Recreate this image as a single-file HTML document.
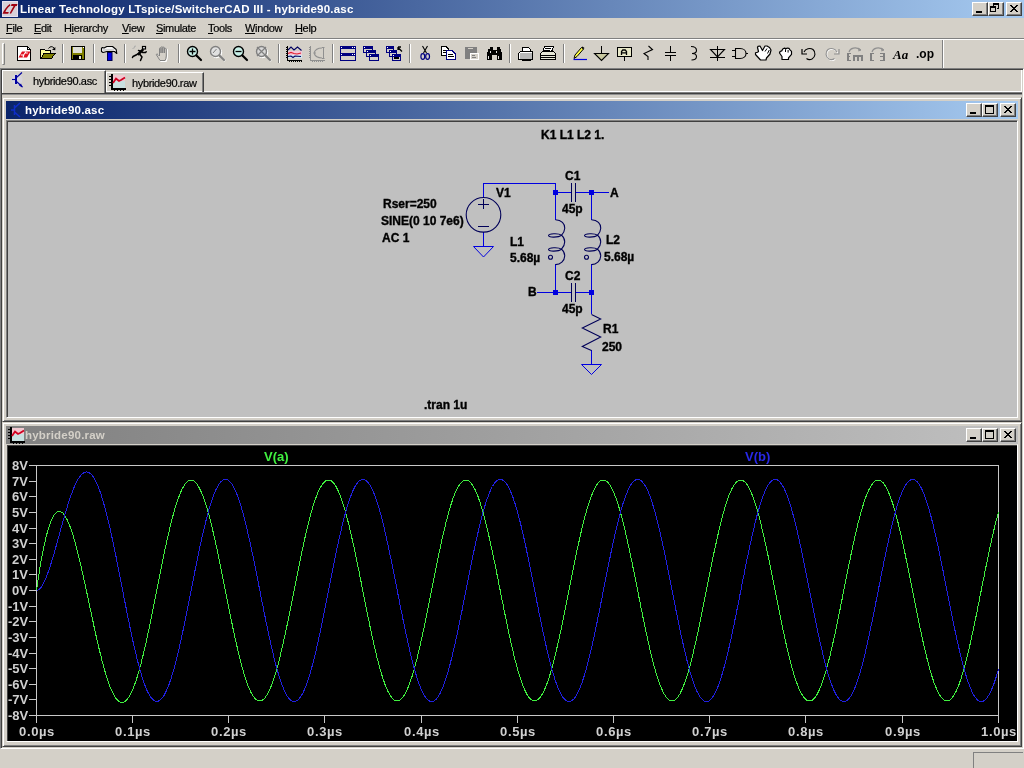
<!DOCTYPE html><html><head><meta charset="utf-8"><style>
*{box-sizing:border-box}
body{margin:0;width:1024px;height:768px;overflow:hidden;background:#D4D0C8;position:relative;font-family:"Liberation Sans",sans-serif;font-size:11px;color:#000}
.a{position:absolute}
.t{position:absolute;white-space:nowrap;line-height:1;will-change:transform}
.btn{position:absolute;width:16px;height:14px;background:#D4D0C8;border-top:1px solid #fff;border-left:1px solid #fff;border-right:1px solid #404040;border-bottom:1px solid #404040;box-shadow:inset -1px -1px 0 #808080}
u{text-decoration:underline;text-underline-offset:1px;text-decoration-thickness:1px}
.ax{color:#D0D0D0;font-size:13px;font-weight:bold}
.mn{letter-spacing:-0.35px;-webkit-text-stroke:0.2px #000}
.sl{font-weight:bold;font-size:12px;-webkit-text-stroke:0.35px #000}
</style></head><body>
<div class="a" style="left:0;top:0;width:1024px;height:18px;background:linear-gradient(to right,#0A246A,#A6CAF0)"></div>
<div class="t" style="left:20px;top:3.5px;font-weight:bold;color:#fff;font-size:11.5px;letter-spacing:0.2px">Linear Technology LTspice/SwitcherCAD III - hybride90.asc</div>
<svg class="a" style="left:2px;top:1px" width="16" height="16"><rect x=".5" y=".5" width="15" height="15" fill="#D8D0D8" stroke="#E8E0F0"/><path d="M0.5,12.8 C2,9 4.5,5.5 7.8,3 L8.4,4.6 C5.8,6.6 4,9 3.4,11 L6.8,11 L6.2,12.8 Z" fill="#A00010"/><path d="M9.5,3 H15.5 L14.8,5 H13.5 L9,12.8 L7.6,12.3 L11.6,5 H9 Z" fill="#A00010"/></svg>
<div class="btn" style="left:972px;top:2px"><svg width="16" height="14" style="position:absolute;left:-1px;top:-1px" shape-rendering="crispEdges"><rect x="4" y="9" width="6" height="2" fill="#000"/></svg></div>
<div class="btn" style="left:988px;top:2px"><svg width="16" height="14" style="position:absolute;left:-1px;top:-1px" shape-rendering="crispEdges"><rect x="5" y="1" width="6" height="2" fill="#000"/><rect x="5" y="3" width="1" height="1" fill="#000"/><rect x="10" y="3" width="1" height="4" fill="#000"/><rect x="9" y="6" width="1" height="1" fill="#000"/><rect x="2" y="4" width="6" height="2" fill="#000"/><rect x="2" y="6" width="1" height="4" fill="#000"/><rect x="7" y="6" width="1" height="4" fill="#000"/><rect x="2" y="9" width="6" height="1" fill="#000"/></svg></div>
<div class="btn" style="left:1006px;top:2px"><svg width="16" height="14" style="position:absolute;left:-1px;top:-1px" shape-rendering="crispEdges"><rect x="4" y="3" width="2" height="1" fill="#000"/><rect x="10" y="3" width="2" height="1" fill="#000"/><rect x="5" y="4" width="2" height="1" fill="#000"/><rect x="9" y="4" width="2" height="1" fill="#000"/><rect x="6" y="5" width="4" height="1" fill="#000"/><rect x="7" y="6" width="2" height="1" fill="#000"/><rect x="6" y="7" width="4" height="1" fill="#000"/><rect x="5" y="8" width="2" height="1" fill="#000"/><rect x="9" y="8" width="2" height="1" fill="#000"/><rect x="4" y="9" width="2" height="1" fill="#000"/><rect x="10" y="9" width="2" height="1" fill="#000"/></svg></div>
<div class="t mn" style="left:6px;top:23px"><u>F</u>ile</div>
<div class="t mn" style="left:34px;top:23px"><u>E</u>dit</div>
<div class="t mn" style="left:64px;top:23px">H<u>i</u>erarchy</div>
<div class="t mn" style="left:122px;top:23px"><u>V</u>iew</div>
<div class="t mn" style="left:156px;top:23px"><u>S</u>imulate</div>
<div class="t mn" style="left:208px;top:23px"><u>T</u>ools</div>
<div class="t mn" style="left:245px;top:23px"><u>W</u>indow</div>
<div class="t mn" style="left:295px;top:23px"><u>H</u>elp</div>
<div class="a" style="left:0;top:38px;width:1024px;height:1px;background:#808080"></div>
<div class="a" style="left:0;top:39px;width:1024px;height:1px;background:#fff"></div>
<svg class="a" style="left:0;top:0" width="1024" height="70"><path d="M2,43 V64 M2,43 H4" stroke="#fff" stroke-width="1" transform="translate(.5,.5)" fill="none"/><path d="M4,43 V64 H2" stroke="#808080" stroke-width="1" transform="translate(.5,.5)" fill="none"/><path d="M62.5,44 V63" stroke="#808080"/><path d="M63.5,44 V63" stroke="#fff"/><path d="M93.5,44 V63" stroke="#808080"/><path d="M94.5,44 V63" stroke="#fff"/><path d="M124.5,44 V63" stroke="#808080"/><path d="M125.5,44 V63" stroke="#fff"/><path d="M178.5,44 V63" stroke="#808080"/><path d="M179.5,44 V63" stroke="#fff"/><path d="M278.5,44 V63" stroke="#808080"/><path d="M279.5,44 V63" stroke="#fff"/><path d="M332.5,44 V63" stroke="#808080"/><path d="M333.5,44 V63" stroke="#fff"/><path d="M409.5,44 V63" stroke="#808080"/><path d="M410.5,44 V63" stroke="#fff"/><path d="M509.5,44 V63" stroke="#808080"/><path d="M510.5,44 V63" stroke="#fff"/><path d="M563.5,44 V63" stroke="#808080"/><path d="M564.5,44 V63" stroke="#fff"/><path d="M942.5,40 V68" stroke="#808080"/><path d="M943.5,40 V68" stroke="#fff"/><g shape-rendering="crispEdges"><path d="M17.5,46.5 H27.5 L30.5,49.5 V60.5 H17.5 Z" fill="#fff" stroke="#000"/><path d="M27.5,46.5 V49.5 H30.5" fill="none" stroke="#000"/></g><path d="M18.5,57.5 L22,51.5 H30.5 L27,57.5 Z" fill="#E01020"/><path d="M20.8,55 H23.6 L25,53 H27.8 M23.8,55 L23,57.5 M25,53 L25.8,51.5" fill="none" stroke="#fff" stroke-width="1.1"/><g shape-rendering="crispEdges"><path d="M40.5,58.5 V49.5 H44.5 L45.5,50.5 H50.5 V53.5" fill="#FFFF99" stroke="#000"/><path d="M41,58.5 L44,53.5 H55 L51.5,58.5 Z" fill="#808000" stroke="#000"/></g><path d="M48.5,48.5 Q51,45 54,48" fill="none" stroke="#000" stroke-width="1"/><path d="M52,49.8 L55.3,47 L55.3,50.3 Z" fill="#000"/><g shape-rendering="crispEdges"><rect x="71.5" y="46.5" width="13" height="13" fill="#808000" stroke="#000"/><rect x="73" y="47" width="9" height="6" fill="#E0E0D8"/><rect x="73" y="55" width="9" height="5" fill="#000"/><rect x="79" y="56" width="2" height="3" fill="#E8E8D0"/><rect x="83" y="47" width="1" height="1" fill="#fff"/></g><path d="M101.5,48.2 L102.5,47.5 L104,48 L106.8,46.5 H112.5 L116.2,49.5 L116.8,53.5 L114.5,51.5 H107 L103,52.5 L101.5,51.5 Z" fill="#F4F4F4" stroke="#000" stroke-width="1.1" stroke-linejoin="round"/><path d="M103,50 H114" stroke="#B0B0B0" stroke-width="1"/><rect x="107.5" y="52.5" width="4.5" height="8" fill="#0000E8" stroke="#000050" stroke-width="1"/><rect x="142.5" y="46.5" width="3" height="2.5" fill="#fff" stroke="#000" stroke-width="1.2"/><path d="M143,49.5 L137,54.5 L133,56.5 L132.5,57.5 M140,54.5 L142,57 L140.5,60.5 M141.8,51.5 L138.5,50.5 M142.5,52.5 L145.5,52.5 L146.2,51.8" fill="none" stroke="#000" stroke-width="1.5" stroke-linejoin="round" stroke-linecap="round"/><path d="M143,49.5 L138,54.8" stroke="#000" stroke-width="2.5"/><path d="M132.5,48.5 L135,47.5 M134,46.5 L136,46" stroke="#A8A8A8" stroke-width=".9"/><path d="M160,60.5 L156.5,55 C156,54 157,53.5 158,54.5 L159.5,56 V48.5 C159.5,47.5 161,47.5 161,48.5 V53 V47.5 C161,46.5 162.8,46.5 162.8,47.5 V53 V47.8 C162.8,46.8 164.5,46.8 164.5,47.8 V53 V49 C164.5,48 166.3,48 166.3,49 V56 C166.3,58 165.5,59.5 165,60.5 Z" fill="#D4D0C8" stroke="#fff" stroke-width="1.2" transform="translate(1,1)"/><path d="M160,60.5 L156.5,55 C156,54 157,53.5 158,54.5 L159.5,56 V48.5 C159.5,47.5 161,47.5 161,48.5 V53 V47.5 C161,46.5 162.8,46.5 162.8,47.5 V53 V47.8 C162.8,46.8 164.5,46.8 164.5,47.8 V53 V49 C164.5,48 166.3,48 166.3,49 V56 C166.3,58 165.5,59.5 165,60.5 Z" fill="#D4D0C8" stroke="#808080" stroke-width="1"/><circle cx="192.5" cy="51.5" r="5" fill="#C8F0E8" stroke="#000" stroke-width="1.4"/><path d="M196.5,55.5 L201.0,60.0" stroke="#000" stroke-width="2.2" stroke-linecap="round"/><path d="M189.5,51.5 H195.5 M192.5,48.5 V54.5" stroke="#000" stroke-width="1.3"/><g transform="translate(1,1)"><circle cx="215.5" cy="51.5" r="5" fill="none" stroke="#fff" stroke-width="1.4"/><path d="M219.5,55.5 L224.0,60.0" stroke="#fff" stroke-width="2"/></g><circle cx="215.5" cy="51.5" r="5" fill="#E0E0E0" stroke="#808080" stroke-width="1.4"/><path d="M219.5,55.5 L224.0,60.0" stroke="#808080" stroke-width="2.2" stroke-linecap="round"/><path d="M213.0,53.0 L216.5,49.0" stroke="#808080" stroke-width="1"/><circle cx="238.5" cy="51.5" r="5" fill="#C8F0E8" stroke="#000" stroke-width="1.4"/><path d="M242.5,55.5 L247.0,60.0" stroke="#000" stroke-width="2.2" stroke-linecap="round"/><path d="M235.5,51.5 H241.5" stroke="#000" stroke-width="1.3"/><g transform="translate(1,1)"><circle cx="261.5" cy="51.5" r="5" fill="none" stroke="#fff" stroke-width="1.4"/><path d="M265.5,55.5 L270.0,60.0" stroke="#fff" stroke-width="2"/></g><circle cx="261.5" cy="51.5" r="5" fill="#D8D8D8" stroke="#808080" stroke-width="1.4"/><path d="M265.5,55.5 L270.0,60.0" stroke="#808080" stroke-width="2.2" stroke-linecap="round"/><path d="M257,47 L266,56 M266,47 L257,56" stroke="#808080" stroke-width="1.2"/><rect x="288" y="51" width="14" height="4" fill="#F4C8D8"/><rect x="288" y="55" width="14" height="3" fill="#D0E8F0"/><g shape-rendering="crispEdges"><path d="M287.5,46 V60.5 H302" fill="none" stroke="#000"/><path d="M286,47.5 H287 M286,49.5 H287 M286,51.5 H287 M286,53.5 H287 M286,55.5 H287 M286,57.5 H287 M289.5,61 V62 M291.5,61 V62 M293.5,61 V62 M295.5,61 V62 M297.5,61 V62 M299.5,61 V62 M301.5,61 V62" stroke="#000"/></g><path d="M288,50 L291,47 L294,50 L297.5,47 L301.5,50.5" fill="none" stroke="#000060" stroke-width="1.1"/><path d="M288,53.5 L291,52.5 L294,53.5 L297,54 L301,53" fill="none" stroke="#E02030" stroke-width="1.2"/><path d="M288,56.5 L291,56 L293,57.5 L295,56 L301,56.5" fill="none" stroke="#000060" stroke-width="1.1"/><g shape-rendering="crispEdges"><path d="M310.5,46 V60.5 H325" fill="none" stroke="#909090"/><path d="M309,47.5 H310 M309,49.5 H310 M309,51.5 H310 M309,53.5 H310 M309,55.5 H310 M309,57.5 H310 M312.5,61 V62 M314.5,61 V62 M316.5,61 V62 M318.5,61 V62 M320.5,61 V62 M322.5,61 V62" stroke="#909090"/><path d="M323.5,47 V59" stroke="#909090"/></g><path d="M322,48 C318,48 315,50 314,53 C315,56 318,58 322,58" fill="none" stroke="#909090" stroke-width="1.1"/><path d="M314,53 H316 M322,47.5 L324.5,47.5 M322,58.5 H324.5" stroke="#909090"/><g shape-rendering="crispEdges"><rect x="340.5" y="46.5" width="15" height="7" fill="#D4D0C8" stroke="#000080"/><rect x="340" y="46" width="16" height="3" fill="#000080"/><rect x="341" y="47" width="1" height="1" fill="#fff"/><rect x="352" y="47" width="1" height="1" fill="#fff"/><rect x="354" y="47" width="1" height="1" fill="#fff"/><rect x="340.5" y="53.5" width="15" height="7" fill="#D4D0C8" stroke="#000080"/><rect x="340" y="53" width="16" height="3" fill="#000080"/><rect x="341" y="54" width="1" height="1" fill="#fff"/><rect x="352" y="54" width="1" height="1" fill="#fff"/><rect x="354" y="54" width="1" height="1" fill="#fff"/><rect x="363.5" y="46.5" width="9" height="6" fill="#D4D0C8" stroke="#000080"/><rect x="363" y="46" width="10" height="3" fill="#000080"/><rect x="364" y="47" width="1" height="1" fill="#fff"/><rect x="366.5" y="50.5" width="9" height="6" fill="#D4D0C8" stroke="#000080"/><rect x="366" y="50" width="10" height="3" fill="#000080"/><rect x="367" y="51" width="1" height="1" fill="#fff"/><rect x="369.5" y="54.5" width="9" height="6" fill="#D4D0C8" stroke="#000080"/><rect x="369" y="54" width="10" height="3" fill="#000080"/><rect x="370" y="55" width="1" height="1" fill="#fff"/><rect x="386.5" y="46.5" width="7" height="6" fill="#D4D0C8" stroke="#000080"/><rect x="386" y="46" width="8" height="3" fill="#000080"/><rect x="387" y="47" width="1" height="1" fill="#fff"/><rect x="389.5" y="50.5" width="7" height="6" fill="#D4D0C8" stroke="#000080"/><rect x="389" y="50" width="8" height="3" fill="#000080"/><rect x="390" y="51" width="1" height="1" fill="#fff"/><rect x="392.5" y="54.5" width="8" height="6" fill="#D4D0C8" stroke="#000080"/><rect x="392" y="54" width="9" height="3" fill="#000080"/><rect x="393" y="55" width="1" height="1" fill="#fff"/><rect x="394" y="57" width="5" height="2" fill="#000"/></g><path d="M398,47.5 L402,51.5 M398,47 V50 M398,47 H401" stroke="#000" stroke-width="1.3" fill="none"/><path d="M422.5,46 L426.5,53 M427.5,46 L423.5,53" stroke="#000" stroke-width="1.1"/><ellipse cx="422.8" cy="56.5" rx="1.9" ry="2.8" fill="none" stroke="#000080" stroke-width="1.2"/><ellipse cx="427.6" cy="56.5" rx="1.9" ry="2.8" fill="none" stroke="#000080" stroke-width="1.2"/><g shape-rendering="crispEdges"><path d="M441.5,46.5 H446 L448.5,49 V55.5 H441.5 Z" fill="#fff" stroke="#000"/><path d="M443,50.5 H446 M443,52.5 H447" stroke="#000"/><path d="M446.5,50.5 H452 L455.5,54 V59.5 H446.5 Z" fill="#fff" stroke="#000080"/><path d="M448,54.5 H453 M448,56.5 H454" stroke="#000"/><rect x="465" y="47" width="12" height="12" fill="#808080"/><path d="M468,48.5 H473" stroke="#D4D0C8"/><rect x="470.5" y="53.5" width="8" height="6" fill="#D4D0C8" stroke="#fff"/><path d="M472,55.5 H475 M472,57.5 H476" stroke="#808080"/><path d="M487,60 V53 L488.5,49 H489.5 V46.5 H492.5 V50 H496.5 V46.5 H499.5 V49 H500.5 L502,53 V60 H497 V55 H492 V60 Z" fill="#000"/><path d="M488.5,56 V58.5 M498.5,56 V58.5 M490.5,51 V52.5 M496.5,51 V52.5" stroke="#E0E0E0"/></g><g shape-rendering="crispEdges"><path d="M522.5,47.5 H528.5 L530.5,49.5 V51.5 H522.5 Z" fill="#fff" stroke="#000"/><path d="M519.5,52.5 L520.5,51.5 H532.5 V59.5 H518.5 V53.5 Z" fill="#fff" stroke="#000"/><rect x="520" y="53" width="12" height="6" fill="#B8B8B8"/><rect x="522" y="60" width="9" height="1" fill="#000"/></g><g shape-rendering="crispEdges"><path d="M544.5,46.5 H553.5 L551.5,52 H542.5 Z" fill="#fff" stroke="#000"/><path d="M545,48.5 H551 M544,50.5 H550" stroke="#000"/><path d="M540.5,53.5 L542.5,51.5 H553.5 L555.5,53.5 V59.5 H540.5 Z" fill="#E8E8D8" stroke="#000"/><path d="M541,55.5 H555 M541,57.5 H555" stroke="#000"/></g><path d="M573.5,59.5 H587" stroke="#0000E0" stroke-width="1.2"/><path d="M574,58.5 L575,55 L581.5,47.5 L583.5,49 L577,56.5 Z" fill="#FFFF40" stroke="#000" stroke-width="1"/><path d="M581.5,47.5 L582.5,46.5 L584.5,48 L583.5,49 Z" fill="#000"/><path d="M601.5,46 V53" stroke="#000"/><path d="M594.5,53.5 H608.5 L601.5,60.5 Z" fill="#C8C8A0" stroke="#000" stroke-width="1.1"/><g shape-rendering="crispEdges"><rect x="617.5" y="47.5" width="14" height="9" rx="1" fill="#E8E8C8" stroke="#000"/><path d="M624.5,57 V61" stroke="#000"/></g><path d="M621.5,55 V51.5 L622.8,50 H625.2 L626.5,51.5 V55 M622,52.8 H626" fill="none" stroke="#000" stroke-width="1.3"/><path d="M648.5,46 L652.5,49.5 L644,53.5 L648,56.5 V60" fill="none" stroke="#000" stroke-width="1.1"/><g shape-rendering="crispEdges"><path d="M670.5,46 V52 M670.5,56 V61 M665,52.5 H676 M665,55.5 H676" stroke="#000"/></g><path d="M691,46.5 C694,46.5 696.5,48 696.5,50.5 C696.5,53 694,53.5 692,53.5 C694,53.5 696.5,54 696.5,56.5 C696.5,59 694,60 691.5,60" fill="none" stroke="#000" stroke-width="1.1"/><path d="M710.5,49.5 H724.5 L717.5,57 Z" fill="#D4D0C8" stroke="#000" stroke-width="1.1"/><g shape-rendering="crispEdges"><path d="M717.5,46 V61 M710,57.5 H725" stroke="#000"/></g><path d="M735.5,48.5 H740 C744,48.5 746,51 746,53.5 C746,56 744,58.5 740,58.5 H735.5 Z" fill="#D4D0C8" stroke="#000" stroke-width="1.1"/><g shape-rendering="crispEdges"><path d="M732,50.5 H735 M732,56.5 H735 M746,53.5 H748" stroke="#000"/></g><path d="M760.5,60 H766 L766.5,58 L770,54 L771,50 L769.5,47.5 L767,46 L765,46 L762.5,50.5 L760,46 L758,46.3 L757.5,47.5 L758.5,51.5 L757.5,52.2 L755.5,52.8 L755.5,54.5 Z" fill="#fff" stroke="#000" stroke-width="1.2" stroke-linejoin="round"/><path d="M765,51.5 L767,48.5 M767.5,53.5 L769.3,50" stroke="#000" stroke-width="1"/><path d="M782,59.5 H788.5 V57.8 L791.5,54.3 V51.3 L789.8,49.6 L789,48.3 L787.2,48.1 L786,48.8 L784.7,48.1 L783,48.7 L781.7,50.9 L780,51.5 L779.5,53 L782,56.5 Z" fill="#fff" stroke="#000" stroke-width="1.2" stroke-linejoin="round"/><path d="M785.5,49.3 V52 M788.1,50 V52.6" stroke="#000" stroke-width="1"/><path d="M804,52 C805.5,48.5 810,47.5 813,49.5 C816,52 815.5,57 812,59 C810,60 808,59.7 806.5,58.5" fill="none" stroke="#000" stroke-width="1.1"/><path d="M802,49 V54 H807" fill="none" stroke="#000" stroke-width="1.2"/><path d="M837,52 C835.5,48.5 831,47.5 828,49.5 C825,52 825.5,57 829,59 C831,60 833,59.7 834.5,58.5" fill="none" stroke="#fff" stroke-width="1.1" transform="translate(.7,.7)"/><path d="M837,52 C835.5,48.5 831,47.5 828,49.5 C825,52 825.5,57 829,59 C831,60 833,59.7 834.5,58.5" fill="none" stroke="#909090" stroke-width="1.1"/><path d="M839,49 V54 H834" fill="none" stroke="#909090" stroke-width="1.2"/><path d="M849,52 C850,48 856,46.5 860,49.5" fill="none" stroke="#909090" stroke-width="1.1"/><path d="M858,48 L861,50 L858.5,51" fill="#909090" stroke="#909090"/><path d="M872,52 C873,48 879,46.5 883,49.5" fill="none" stroke="#909090" stroke-width="1.1"/><path d="M881,48 L884,50 L881.5,51" fill="#909090" stroke="#909090"/><g shape-rendering="crispEdges" fill="#808080"><rect x="847" y="53" width="2" height="8"/><rect x="847" y="53" width="4" height="1"/><rect x="847" y="56" width="3" height="1"/><rect x="847" y="60" width="4" height="1"/><rect x="853" y="55" width="10" height="2"/><rect x="853" y="55" width="2" height="6"/><rect x="857" y="55" width="2" height="6"/><rect x="861" y="55" width="2" height="6"/><rect x="870" y="53" width="2" height="8"/><rect x="870" y="53" width="4" height="1"/><rect x="870" y="60" width="4" height="1"/><rect x="880" y="53" width="5" height="1"/><rect x="883" y="53" width="2" height="8"/><rect x="880" y="56" width="4" height="1"/><rect x="880" y="60" width="5" height="1"/></g><text x="893" y="58.5" font-family="Liberation Serif" font-weight="bold" font-style="italic" font-size="13px" fill="#000">Aa</text><text x="916" y="57.5" font-family="Liberation Sans" font-weight="bold" font-size="12px" fill="#000">.op</text></svg>
<div class="a" style="left:0;top:68px;width:1024px;height:681px;border-left:1px solid #808080;border-top:1px solid #808080;border-right:1px solid #fff;border-bottom:1px solid #fff;box-shadow:inset 1px 1px 0 #404040,inset -1px -1px 0 #D4D0C8"></div>
<div class="a" style="left:1021px;top:70px;width:1px;height:23px;background:#fff"></div>
<div class="a" style="left:2px;top:91px;width:1020px;height:1px;background:#fff"></div>
<div class="a" style="left:2px;top:92px;width:1020px;height:1px;background:#808080"></div>
<div class="a" style="left:2px;top:93px;width:1020px;height:1px;background:#404040"></div>
<div class="a" style="left:2px;top:94px;width:1020px;height:1px;background:#909090"></div>
<div class="a" style="left:2px;top:70px;width:104px;height:23px;background:#D4D0C8;border-left:1px solid #fff;border-top:1px solid #fff;border-right:1px solid #404040;box-shadow:inset -1px 0 0 #808080"></div>
<div class="t mn" style="left:33px;top:76px">hybride90.asc</div>
<svg class="a" style="left:10px;top:71px" width="16" height="18"><circle cx="7" cy="8.5" r="5.5" fill="#D8D8F0" opacity=".5"/><path d="M2,8.5 H5.5" stroke="#0000A0" stroke-width="1.1"/><path d="M6,4 V13" stroke="#0000A0" stroke-width="2"/><path d="M6.5,6.5 L12,1.5 M6.5,10.5 L12.5,16" stroke="#0000A0" stroke-width="1.1"/><path d="M9,14.5 L12.5,16.5 L11,12.5 Z" fill="#0000A0"/></svg>
<div class="a" style="left:106px;top:72px;width:98px;height:20px;border-left:1px solid #fff;border-top:1px solid #fff;border-right:1px solid #404040;box-shadow:inset -1px 0 0 #808080"></div>
<div class="t mn" style="left:132px;top:78px">hybride90.raw</div>
<svg class="a" style="left:109px;top:74px" width="17" height="17" shape-rendering="crispEdges"><rect x="3" y="1" width="13" height="6" fill="#F0C8D0"/><rect x="3" y="7" width="13" height="7" fill="#C8E0E0"/><rect x="2" y="0" width="2" height="16" fill="#000"/><rect x="2" y="14" width="15" height="2" fill="#000"/><rect x="0" y="2" width="2" height="1" fill="#000"/><rect x="0" y="5" width="2" height="1" fill="#000"/><rect x="0" y="8" width="2" height="1" fill="#000"/><rect x="0" y="11" width="2" height="1" fill="#000"/><rect x="5" y="16" width="1" height="1" fill="#000"/><rect x="8" y="16" width="1" height="1" fill="#000"/><rect x="11" y="16" width="1" height="1" fill="#000"/><rect x="14" y="16" width="1" height="1" fill="#000"/><path d="M4,9 L7,4.5 L10,7 L12,6 L16,3.5" fill="none" stroke="#D00020" stroke-width="1.8" shape-rendering="auto"/></svg>
<div class="a" style="left:2px;top:97px;width:1020px;height:325px;background:#D4D0C8;border-left:1px solid #D4D0C8;border-top:1px solid #D4D0C8;border-right:1px solid #404040;border-bottom:1px solid #404040;box-shadow:inset 1px 1px 0 #fff,inset -1px -1px 0 #808080"></div><div class="a" style="left:6px;top:101px;width:1012px;height:18px;background:linear-gradient(to right,#0A246A,#A6CAF0)"></div><div class="t" style="left:25px;top:105px;font-weight:bold;color:#fff;font-size:11.5px;letter-spacing:0.2px">hybride90.asc</div><div class="btn" style="left:966px;top:103px"><svg width="16" height="14" style="position:absolute;left:-1px;top:-1px" shape-rendering="crispEdges"><rect x="4" y="9" width="6" height="2" fill="#000"/></svg></div><div class="btn" style="left:982px;top:103px"><svg width="16" height="14" style="position:absolute;left:-1px;top:-1px" shape-rendering="crispEdges"><rect x="3" y="2" width="9" height="2" fill="#000"/><rect x="3" y="4" width="1" height="7" fill="#000"/><rect x="11" y="4" width="1" height="7" fill="#000"/><rect x="3" y="10" width="9" height="1" fill="#000"/></svg></div><div class="btn" style="left:1000px;top:103px"><svg width="16" height="14" style="position:absolute;left:-1px;top:-1px" shape-rendering="crispEdges"><rect x="4" y="3" width="2" height="1" fill="#000"/><rect x="10" y="3" width="2" height="1" fill="#000"/><rect x="5" y="4" width="2" height="1" fill="#000"/><rect x="9" y="4" width="2" height="1" fill="#000"/><rect x="6" y="5" width="4" height="1" fill="#000"/><rect x="7" y="6" width="2" height="1" fill="#000"/><rect x="6" y="7" width="4" height="1" fill="#000"/><rect x="5" y="8" width="2" height="1" fill="#000"/><rect x="9" y="8" width="2" height="1" fill="#000"/><rect x="4" y="9" width="2" height="1" fill="#000"/><rect x="10" y="9" width="2" height="1" fill="#000"/></svg></div>
<div class="a" style="left:6px;top:120px;width:1012px;height:298px;background:#C0C0C0;border-left:1px solid #808080;border-top:1px solid #808080;border-right:1px solid #fff;border-bottom:1px solid #fff;box-shadow:inset 1px 1px 0 #404040"></div>
<svg class="a" style="left:10px;top:102px" width="14" height="16"><path d="M1,8 H4 M4.5,3 V13 M5,5.5 L10,1 M5,10.5 L10,15" stroke="#1030F0" stroke-width="1.5" opacity=".7"/></svg>
<div class="a" style="left:2px;top:422px;width:1020px;height:325px;background:#D4D0C8;border-left:1px solid #D4D0C8;border-top:1px solid #D4D0C8;border-right:1px solid #404040;border-bottom:1px solid #404040;box-shadow:inset 1px 1px 0 #fff,inset -1px -1px 0 #808080"></div><div class="a" style="left:6px;top:426px;width:1012px;height:18px;background:linear-gradient(to right,#808080,#C0C0C0)"></div><div class="t" style="left:25px;top:430px;font-weight:bold;color:#D4D0C8;font-size:11.5px;letter-spacing:0.2px">hybride90.raw</div><div class="btn" style="left:966px;top:428px"><svg width="16" height="14" style="position:absolute;left:-1px;top:-1px" shape-rendering="crispEdges"><rect x="4" y="9" width="6" height="2" fill="#000"/></svg></div><div class="btn" style="left:982px;top:428px"><svg width="16" height="14" style="position:absolute;left:-1px;top:-1px" shape-rendering="crispEdges"><rect x="3" y="2" width="9" height="2" fill="#000"/><rect x="3" y="4" width="1" height="7" fill="#000"/><rect x="11" y="4" width="1" height="7" fill="#000"/><rect x="3" y="10" width="9" height="1" fill="#000"/></svg></div><div class="btn" style="left:1000px;top:428px"><svg width="16" height="14" style="position:absolute;left:-1px;top:-1px" shape-rendering="crispEdges"><rect x="4" y="3" width="2" height="1" fill="#000"/><rect x="10" y="3" width="2" height="1" fill="#000"/><rect x="5" y="4" width="2" height="1" fill="#000"/><rect x="9" y="4" width="2" height="1" fill="#000"/><rect x="6" y="5" width="4" height="1" fill="#000"/><rect x="7" y="6" width="2" height="1" fill="#000"/><rect x="6" y="7" width="4" height="1" fill="#000"/><rect x="5" y="8" width="2" height="1" fill="#000"/><rect x="9" y="8" width="2" height="1" fill="#000"/><rect x="4" y="9" width="2" height="1" fill="#000"/><rect x="10" y="9" width="2" height="1" fill="#000"/></svg></div>
<div class="a" style="left:6px;top:444px;width:1012px;height:298px;background:#000;border-left:1px solid #D4D0C8;border-top:1px solid #D4D0C8;border-right:1px solid #fff;border-bottom:1px solid #fff;box-shadow:inset 1px 1px 0 #404040"></div>
<svg class="a" style="left:8px;top:427px" width="17" height="17" shape-rendering="crispEdges"><rect x="3" y="1" width="13" height="6" fill="#F0C8D0"/><rect x="3" y="7" width="13" height="7" fill="#C8E0E0"/><rect x="2" y="0" width="2" height="16" fill="#000"/><rect x="2" y="14" width="15" height="2" fill="#000"/><rect x="0" y="2" width="2" height="1" fill="#000"/><rect x="0" y="5" width="2" height="1" fill="#000"/><rect x="0" y="8" width="2" height="1" fill="#000"/><rect x="0" y="11" width="2" height="1" fill="#000"/><rect x="5" y="16" width="1" height="1" fill="#000"/><rect x="8" y="16" width="1" height="1" fill="#000"/><rect x="11" y="16" width="1" height="1" fill="#000"/><rect x="14" y="16" width="1" height="1" fill="#000"/><path d="M4,9 L7,4.5 L10,7 L12,6 L16,3.5" fill="none" stroke="#D00020" stroke-width="1.8" shape-rendering="auto"/></svg>
<svg class="a" style="left:0;top:0" width="1024" height="768"><g stroke="#0000E0" fill="none" shape-rendering="crispEdges" stroke-width="1"><path d="M483.5,197 V183.5 H555.5 V220"/><path d="M483.5,232 V246"/><path d="M555.5,192.5 H571 M576,192.5 H609"/><path d="M591.5,192.5 V220"/><path d="M555.5,264 V292.5 M537,292.5 H571 M576,292.5 H591 M591.5,264 V314"/><path d="M591.5,350 V364"/></g><g stroke="#0000E0" fill="none" stroke-width="1"><path d="M473.5,246.5 H493.5 L483.5,257 Z"/><path d="M581.5,364.5 H601.5 L591.5,374.5 Z"/></g><rect x="553.0" y="190.0" width="5" height="5" fill="#0000E0"/><rect x="589.0" y="190.0" width="5" height="5" fill="#0000E0"/><rect x="553.0" y="290.0" width="5" height="5" fill="#0000E0"/><rect x="589.0" y="290.0" width="5" height="5" fill="#0000E0"/><g stroke="#000058" fill="none" stroke-width="1.1"><circle cx="483.5" cy="214.8" r="17.3"/><path d="M478,204.5 H488.5 M483.5,199 V209 M478,226.5 H488.5" shape-rendering="crispEdges" stroke-width="1"/><path d="M571.5,183 V201.5 M575.5,183 V201.5 M571.5,283 V301.5 M575.5,283 V301.5" shape-rendering="crispEdges" stroke-width="1"/><path d="M591.5,314.5 L600.7,319 L582.3,328.1 L600.7,337 L582.3,346.4 L591.5,350.5"/><path d="M555.5,219.8 C561.5,219.8 565.0,224 564.7,228.5 C564.5,232 562.5,234 561.5,235.2 C558.5,237.5 548.5,237.8 548.5,235.6 C548.5,233.5 558.5,233 561.5,235.2 C563.5,237 564.8,239 564.7,242 C564.7,245 563.5,247 561.5,249.2 C558.5,251.5 548.5,251.8 548.5,249.6 C548.5,247.5 558.5,247 561.5,249.2 C563.5,251 564.8,253 564.7,256 C564.5,261 560.5,264.6 555.5,264.6"/><circle cx="550.5" cy="257.3" r="2"/><path d="M591.5,219.8 C597.5,219.8 601.0,224 600.7,228.5 C600.5,232 598.5,234 597.5,235.2 C594.5,237.5 584.5,237.8 584.5,235.6 C584.5,233.5 594.5,233 597.5,235.2 C599.5,237 600.8,239 600.7,242 C600.7,245 599.5,247 597.5,249.2 C594.5,251.5 584.5,251.8 584.5,249.6 C584.5,247.5 594.5,247 597.5,249.2 C599.5,251 600.8,253 600.7,256 C600.5,261 596.5,264.6 591.5,264.6"/><circle cx="586.5" cy="257.3" r="2"/></g></svg>
<div class="t sl" style="left:540.8px;top:129.2px">K1 L1 L2 1.</div>
<div class="t sl" style="left:382.5px;top:198.4px">Rser=250</div>
<div class="t sl" style="left:381.0px;top:215.3px">SINE(0 10 7e6)</div>
<div class="t sl" style="left:382.0px;top:232.0px">AC 1</div>
<div class="t sl" style="left:496.0px;top:187.2px">V1</div>
<div class="t sl" style="left:564.7px;top:170.2px">C1</div>
<div class="t sl" style="left:562.0px;top:202.5px">45p</div>
<div class="t sl" style="left:610.0px;top:187.4px">A</div>
<div class="t sl" style="left:509.7px;top:236.3px">L1</div>
<div class="t sl" style="left:509.7px;top:251.9px">5.68µ</div>
<div class="t sl" style="left:605.8px;top:234.3px">L2</div>
<div class="t sl" style="left:604.0px;top:250.9px">5.68µ</div>
<div class="t sl" style="left:565.0px;top:270.1px">C2</div>
<div class="t sl" style="left:562.2px;top:302.8px">45p</div>
<div class="t sl" style="left:527.8px;top:285.7px">B</div>
<div class="t sl" style="left:603.1px;top:323.0px">R1</div>
<div class="t sl" style="left:601.8px;top:341.0px">250</div>
<div class="t sl" style="left:423.9px;top:399.2px">.tran 1u</div>
<svg class="a" style="left:0;top:0" width="1024" height="768"><defs><clipPath id="pc"><rect x="36" y="465" width="963" height="251"/></clipPath></defs><g stroke="#C8C8C8" fill="none" shape-rendering="crispEdges"><rect x="36.5" y="465.5" width="962" height="250"/><line x1="29" y1="465.5" x2="36" y2="465.5"/><line x1="29" y1="481.5" x2="36" y2="481.5"/><line x1="29" y1="496.5" x2="36" y2="496.5"/><line x1="29" y1="512.5" x2="36" y2="512.5"/><line x1="29" y1="528.5" x2="36" y2="528.5"/><line x1="29" y1="543.5" x2="36" y2="543.5"/><line x1="29" y1="559.5" x2="36" y2="559.5"/><line x1="29" y1="574.5" x2="36" y2="574.5"/><line x1="29" y1="590.5" x2="36" y2="590.5"/><line x1="29" y1="606.5" x2="36" y2="606.5"/><line x1="29" y1="621.5" x2="36" y2="621.5"/><line x1="29" y1="637.5" x2="36" y2="637.5"/><line x1="29" y1="653.5" x2="36" y2="653.5"/><line x1="29" y1="668.5" x2="36" y2="668.5"/><line x1="29" y1="684.5" x2="36" y2="684.5"/><line x1="29" y1="699.5" x2="36" y2="699.5"/><line x1="29" y1="715.5" x2="36" y2="715.5"/><line x1="36.5" y1="716" x2="36.5" y2="723"/><line x1="132.5" y1="716" x2="132.5" y2="723"/><line x1="228.5" y1="716" x2="228.5" y2="723"/><line x1="324.5" y1="716" x2="324.5" y2="723"/><line x1="421.5" y1="716" x2="421.5" y2="723"/><line x1="517.5" y1="716" x2="517.5" y2="723"/><line x1="613.5" y1="716" x2="613.5" y2="723"/><line x1="709.5" y1="716" x2="709.5" y2="723"/><line x1="805.5" y1="716" x2="805.5" y2="723"/><line x1="902.5" y1="716" x2="902.5" y2="723"/><line x1="998.5" y1="716" x2="998.5" y2="723"/></g><g clip-path="url(#pc)" fill="none" stroke-width="1" shape-rendering="crispEdges"><path d="M36.5,590.5 L37.0,587.1 L37.5,583.8 L37.9,580.5 L38.4,577.4 L38.9,574.3 L39.4,571.2 L39.9,568.3 L40.3,565.4 L40.8,562.6 L41.3,559.9 L41.8,557.3 L42.3,554.7 L42.8,552.2 L43.2,549.8 L43.7,547.5 L44.2,545.2 L44.7,543.0 L45.2,540.9 L45.6,538.9 L46.1,536.9 L46.6,535.0 L47.1,533.2 L47.6,531.4 L48.0,529.8 L48.5,528.2 L49.0,526.7 L49.5,525.2 L50.0,523.9 L50.4,522.6 L50.9,521.3 L51.4,520.2 L51.9,519.1 L52.4,518.1 L52.9,517.2 L53.3,516.3 L53.8,515.5 L54.3,514.8 L54.8,514.1 L55.3,513.5 L55.7,513.0 L56.2,512.6 L56.7,512.2 L57.2,511.9 L57.7,511.7 L58.1,511.5 L58.6,511.4 L59.1,511.3 L59.6,511.4 L60.1,511.5 L60.5,511.6 L61.0,511.8 L61.5,512.1 L62.0,512.4 L62.5,512.8 L63.0,513.3 L63.4,513.8 L63.9,514.4 L64.4,515.1 L64.9,515.8 L65.4,516.5 L65.8,517.3 L66.3,518.2 L66.8,519.1 L67.3,520.1 L67.8,521.1 L68.2,522.2 L68.7,523.3 L69.2,524.5 L69.7,525.7 L70.2,527.0 L70.7,528.3 L71.1,529.7 L71.6,531.1 L72.1,532.6 L72.6,534.1 L73.1,535.6 L73.5,537.2 L74.0,538.8 L74.5,540.5 L75.0,542.2 L75.5,543.9 L75.9,545.7 L76.4,547.5 L76.9,549.3 L77.4,551.2 L77.9,553.1 L78.3,555.1 L78.8,557.0 L79.3,559.0 L79.8,561.0 L80.3,563.0 L80.8,565.1 L81.2,567.2 L81.7,569.3 L82.2,571.4 L82.7,573.6 L83.2,575.7 L83.6,577.9 L84.1,580.1 L84.6,582.3 L85.1,584.5 L85.6,586.7 L86.0,589.0 L86.5,591.2 L87.0,593.5 L87.5,595.7 L88.0,598.0 L88.4,600.2 L88.9,602.5 L89.4,604.8 L89.9,607.1 L90.4,609.3 L90.9,611.6 L91.3,613.9 L91.8,616.1 L92.3,618.4 L92.8,620.6 L93.3,622.8 L93.7,625.1 L94.2,627.3 L94.7,629.5 L95.2,631.7 L95.7,633.8 L96.1,636.0 L96.6,638.1 L97.1,640.3 L97.6,642.4 L98.1,644.4 L98.5,646.5 L99.0,648.5 L99.5,650.5 L100.0,652.5 L100.5,654.5 L101.0,656.4 L101.4,658.3 L101.9,660.2 L102.4,662.1 L102.9,663.9 L103.4,665.7 L103.8,667.4 L104.3,669.1 L104.8,670.8 L105.3,672.5 L105.8,674.1 L106.2,675.6 L106.7,677.2 L107.2,678.7 L107.7,680.1 L108.2,681.6 L108.6,682.9 L109.1,684.3 L109.6,685.6 L110.1,686.8 L110.6,688.0 L111.1,689.2 L111.5,690.3 L112.0,691.3 L112.5,692.4 L113.0,693.3 L113.5,694.3 L113.9,695.1 L114.4,696.0 L114.9,696.8 L115.4,697.5 L115.9,698.2 L116.3,698.8 L116.8,699.4 L117.3,699.9 L117.8,700.4 L118.3,700.8 L118.8,701.2 L119.2,701.5 L119.7,701.8 L120.2,702.0 L120.7,702.2 L121.2,702.3 L121.6,702.4 L122.1,702.4 L122.6,702.3 L123.1,702.3 L123.6,702.1 L124.0,701.9 L124.5,701.7 L125.0,701.3 L125.5,701.0 L126.0,700.6 L126.4,700.1 L126.9,699.6 L127.4,699.0 L127.9,698.4 L128.4,697.8 L128.9,697.0 L129.3,696.3 L129.8,695.5 L130.3,694.6 L130.8,693.7 L131.3,692.7 L131.7,691.7 L132.2,690.6 L132.7,689.5 L133.2,688.4 L133.7,687.2 L134.1,685.9 L134.6,684.6 L135.1,683.3 L135.6,681.9 L136.1,680.5 L136.5,679.0 L137.0,677.5 L137.5,675.9 L138.0,674.3 L138.5,672.7 L139.0,671.0 L139.4,669.3 L139.9,667.6 L140.4,665.8 L140.9,664.0 L141.4,662.1 L141.8,660.2 L142.3,658.3 L142.8,656.3 L143.3,654.3 L143.8,652.3 L144.2,650.3 L144.7,648.2 L145.2,646.1 L145.7,644.0 L146.2,641.8 L146.6,639.6 L147.1,637.4 L147.6,635.2 L148.1,633.0 L148.6,630.7 L149.1,628.4 L149.5,626.1 L150.0,623.8 L150.5,621.5 L151.0,619.1 L151.5,616.7 L151.9,614.4 L152.4,612.0 L152.9,609.6 L153.4,607.2 L153.9,604.8 L154.3,602.4 L154.8,599.9 L155.3,597.5 L155.8,595.1 L156.3,592.6 L156.8,590.2 L157.2,587.8 L157.7,585.3 L158.2,582.9 L158.7,580.5 L159.2,578.0 L159.6,575.6 L160.1,573.2 L160.6,570.8 L161.1,568.4 L161.6,566.1 L162.0,563.7 L162.5,561.3 L163.0,559.0 L163.5,556.7 L164.0,554.4 L164.4,552.1 L164.9,549.8 L165.4,547.6 L165.9,545.3 L166.4,543.1 L166.9,540.9 L167.3,538.8 L167.8,536.6 L168.3,534.5 L168.8,532.5 L169.3,530.4 L169.7,528.4 L170.2,526.4 L170.7,524.4 L171.2,522.5 L171.7,520.6 L172.1,518.7 L172.6,516.9 L173.1,515.1 L173.6,513.3 L174.1,511.6 L174.5,509.9 L175.0,508.3 L175.5,506.7 L176.0,505.1 L176.5,503.6 L177.0,502.1 L177.4,500.7 L177.9,499.3 L178.4,498.0 L178.9,496.7 L179.4,495.4 L179.8,494.2 L180.3,493.0 L180.8,491.9 L181.3,490.8 L181.8,489.8 L182.2,488.9 L182.7,487.9 L183.2,487.1 L183.7,486.2 L184.2,485.5 L184.6,484.7 L185.1,484.1 L185.6,483.4 L186.1,482.9 L186.6,482.4 L187.1,481.9 L187.5,481.5 L188.0,481.1 L188.5,480.8 L189.0,480.6 L189.5,480.4 L189.9,480.2 L190.4,480.1 L190.9,480.1 L191.4,480.1 L191.9,480.2 L192.3,480.3 L192.8,480.5 L193.3,480.7 L193.8,481.0 L194.3,481.3 L194.7,481.7 L195.2,482.2 L195.7,482.7 L196.2,483.2 L196.7,483.8 L197.2,484.4 L197.6,485.1 L198.1,485.9 L198.6,486.7 L199.1,487.6 L199.6,488.5 L200.0,489.4 L200.5,490.4 L201.0,491.5 L201.5,492.5 L202.0,493.7 L202.4,494.9 L202.9,496.1 L203.4,497.4 L203.9,498.7 L204.4,500.1 L204.9,501.5 L205.3,503.0 L205.8,504.5 L206.3,506.0 L206.8,507.6 L207.3,509.2 L207.7,510.9 L208.2,512.6 L208.7,514.3 L209.2,516.1 L209.7,517.9 L210.1,519.8 L210.6,521.6 L211.1,523.6 L211.6,525.5 L212.1,527.5 L212.5,529.5 L213.0,531.5 L213.5,533.6 L214.0,535.7 L214.5,537.8 L215.0,540.0 L215.4,542.1 L215.9,544.3 L216.4,546.5 L216.9,548.8 L217.4,551.0 L217.8,553.3 L218.3,555.6 L218.8,557.9 L219.3,560.3 L219.8,562.6 L220.2,565.0 L220.7,567.3 L221.2,569.7 L221.7,572.1 L222.2,574.5 L222.6,576.9 L223.1,579.3 L223.6,581.7 L224.1,584.2 L224.6,586.6 L225.1,589.0 L225.5,591.4 L226.0,593.9 L226.5,596.3 L227.0,598.7 L227.5,601.1 L227.9,603.5 L228.4,606.0 L228.9,608.4 L229.4,610.7 L229.9,613.1 L230.3,615.5 L230.8,617.9 L231.3,620.2 L231.8,622.5 L232.3,624.9 L232.7,627.2 L233.2,629.4 L233.7,631.7 L234.2,633.9 L234.7,636.2 L235.2,638.4 L235.6,640.5 L236.1,642.7 L236.6,644.8 L237.1,646.9 L237.6,649.0 L238.0,651.0 L238.5,653.1 L239.0,655.0 L239.5,657.0 L240.0,658.9 L240.4,660.8 L240.9,662.7 L241.4,664.5 L241.9,666.3 L242.4,668.0 L242.8,669.7 L243.3,671.4 L243.8,673.0 L244.3,674.6 L244.8,676.2 L245.3,677.7 L245.7,679.2 L246.2,680.6 L246.7,682.0 L247.2,683.3 L247.7,684.6 L248.1,685.9 L248.6,687.1 L249.1,688.2 L249.6,689.3 L250.1,690.4 L250.5,691.4 L251.0,692.4 L251.5,693.3 L252.0,694.1 L252.5,695.0 L253.0,695.7 L253.4,696.4 L253.9,697.1 L254.4,697.7 L254.9,698.3 L255.4,698.8 L255.8,699.2 L256.3,699.6 L256.8,700.0 L257.3,700.3 L257.8,700.5 L258.2,700.7 L258.7,700.8 L259.2,700.9 L259.7,700.9 L260.2,700.9 L260.6,700.8 L261.1,700.7 L261.6,700.5 L262.1,700.3 L262.6,700.0 L263.1,699.7 L263.5,699.3 L264.0,698.8 L264.5,698.3 L265.0,697.8 L265.5,697.2 L265.9,696.5 L266.4,695.8 L266.9,695.0 L267.4,694.2 L267.9,693.4 L268.3,692.4 L268.8,691.5 L269.3,690.5 L269.8,689.4 L270.3,688.3 L270.7,687.2 L271.2,686.0 L271.7,684.7 L272.2,683.4 L272.7,682.1 L273.2,680.7 L273.6,679.3 L274.1,677.8 L274.6,676.3 L275.1,674.8 L275.6,673.2 L276.0,671.6 L276.5,669.9 L277.0,668.2 L277.5,666.4 L278.0,664.7 L278.4,662.8 L278.9,661.0 L279.4,659.1 L279.9,657.2 L280.4,655.2 L280.8,653.2 L281.3,651.2 L281.8,649.2 L282.3,647.1 L282.8,645.0 L283.3,642.9 L283.7,640.7 L284.2,638.6 L284.7,636.4 L285.2,634.1 L285.7,631.9 L286.1,629.6 L286.6,627.4 L287.1,625.1 L287.6,622.8 L288.1,620.4 L288.5,618.1 L289.0,615.7 L289.5,613.3 L290.0,611.0 L290.5,608.6 L290.9,606.2 L291.4,603.8 L291.9,601.4 L292.4,598.9 L292.9,596.5 L293.4,594.1 L293.8,591.7 L294.3,589.2 L294.8,586.8 L295.3,584.4 L295.8,581.9 L296.2,579.5 L296.7,577.1 L297.2,574.7 L297.7,572.3 L298.2,569.9 L298.6,567.5 L299.1,565.2 L299.6,562.8 L300.1,560.5 L300.6,558.1 L301.1,555.8 L301.5,553.5 L302.0,551.2 L302.5,549.0 L303.0,546.7 L303.5,544.5 L303.9,542.3 L304.4,540.2 L304.9,538.0 L305.4,535.9 L305.9,533.8 L306.3,531.7 L306.8,529.7 L307.3,527.7 L307.8,525.7 L308.3,523.7 L308.7,521.8 L309.2,519.9 L309.7,518.1 L310.2,516.3 L310.7,514.5 L311.2,512.7 L311.6,511.0 L312.1,509.4 L312.6,507.7 L313.1,506.1 L313.6,504.6 L314.0,503.1 L314.5,501.6 L315.0,500.2 L315.5,498.8 L316.0,497.5 L316.4,496.2 L316.9,495.0 L317.4,493.8 L317.9,492.6 L318.4,491.5 L318.8,490.5 L319.3,489.5 L319.8,488.5 L320.3,487.6 L320.8,486.7 L321.3,485.9 L321.7,485.2 L322.2,484.5 L322.7,483.8 L323.2,483.2 L323.7,482.7 L324.1,482.2 L324.6,481.7 L325.1,481.3 L325.6,481.0 L326.1,480.7 L326.5,480.5 L327.0,480.3 L327.5,480.2 L328.0,480.1 L328.5,480.1 L328.9,480.1 L329.4,480.2 L329.9,480.3 L330.4,480.5 L330.9,480.7 L331.4,481.0 L331.8,481.4 L332.3,481.8 L332.8,482.3 L333.3,482.8 L333.8,483.3 L334.2,483.9 L334.7,484.6 L335.2,485.3 L335.7,486.1 L336.2,486.9 L336.6,487.8 L337.1,488.7 L337.6,489.7 L338.1,490.7 L338.6,491.7 L339.0,492.8 L339.5,494.0 L340.0,495.2 L340.5,496.5 L341.0,497.7 L341.5,499.1 L341.9,500.5 L342.4,501.9 L342.9,503.4 L343.4,504.9 L343.9,506.4 L344.3,508.0 L344.8,509.7 L345.3,511.3 L345.8,513.1 L346.3,514.8 L346.7,516.6 L347.2,518.4 L347.7,520.3 L348.2,522.2 L348.7,524.1 L349.2,526.1 L349.6,528.0 L350.1,530.1 L350.6,532.1 L351.1,534.2 L351.6,536.3 L352.0,538.4 L352.5,540.6 L353.0,542.7 L353.5,544.9 L354.0,547.2 L354.4,549.4 L354.9,551.7 L355.4,554.0 L355.9,556.3 L356.4,558.6 L356.8,560.9 L357.3,563.3 L357.8,565.6 L358.3,568.0 L358.8,570.4 L359.3,572.8 L359.7,575.2 L360.2,577.6 L360.7,580.0 L361.2,582.4 L361.7,584.8 L362.1,587.3 L362.6,589.7 L363.1,592.1 L363.6,594.5 L364.1,597.0 L364.5,599.4 L365.0,601.8 L365.5,604.2 L366.0,606.6 L366.5,609.0 L366.9,611.4 L367.4,613.8 L367.9,616.2 L368.4,618.5 L368.9,620.9 L369.4,623.2 L369.8,625.5 L370.3,627.8 L370.8,630.1 L371.3,632.3 L371.8,634.6 L372.2,636.8 L372.7,639.0 L373.2,641.2 L373.7,643.3 L374.2,645.4 L374.6,647.5 L375.1,649.6 L375.6,651.6 L376.1,653.6 L376.6,655.6 L377.0,657.6 L377.5,659.5 L378.0,661.3 L378.5,663.2 L379.0,665.0 L379.5,666.8 L379.9,668.5 L380.4,670.2 L380.9,671.9 L381.4,673.5 L381.9,675.1 L382.3,676.6 L382.8,678.1 L383.3,679.6 L383.8,681.0 L384.3,682.4 L384.7,683.7 L385.2,685.0 L385.7,686.2 L386.2,687.4 L386.7,688.5 L387.1,689.6 L387.6,690.7 L388.1,691.7 L388.6,692.6 L389.1,693.5 L389.6,694.4 L390.0,695.2 L390.5,695.9 L391.0,696.6 L391.5,697.3 L392.0,697.9 L392.4,698.4 L392.9,698.9 L393.4,699.3 L393.9,699.7 L394.4,700.1 L394.8,700.3 L395.3,700.6 L395.8,700.7 L396.3,700.9 L396.8,700.9 L397.2,700.9 L397.7,700.9 L398.2,700.8 L398.7,700.7 L399.2,700.5 L399.7,700.2 L400.1,699.9 L400.6,699.5 L401.1,699.1 L401.6,698.7 L402.1,698.2 L402.5,697.6 L403.0,697.0 L403.5,696.3 L404.0,695.6 L404.5,694.8 L404.9,694.0 L405.4,693.1 L405.9,692.2 L406.4,691.2 L406.9,690.2 L407.4,689.1 L407.8,688.0 L408.3,686.8 L408.8,685.6 L409.3,684.4 L409.8,683.1 L410.2,681.7 L410.7,680.3 L411.2,678.9 L411.7,677.4 L412.2,675.9 L412.6,674.3 L413.1,672.7 L413.6,671.1 L414.1,669.4 L414.6,667.7 L415.0,665.9 L415.5,664.1 L416.0,662.3 L416.5,660.5 L417.0,658.6 L417.5,656.6 L417.9,654.7 L418.4,652.7 L418.9,650.7 L419.4,648.6 L419.9,646.5 L420.3,644.4 L420.8,642.3 L421.3,640.1 L421.8,637.9 L422.3,635.7 L422.7,633.5 L423.2,631.3 L423.7,629.0 L424.2,626.7 L424.7,624.4 L425.1,622.1 L425.6,619.8 L426.1,617.4 L426.6,615.0 L427.1,612.7 L427.6,610.3 L428.0,607.9 L428.5,605.5 L429.0,603.1 L429.5,600.7 L430.0,598.2 L430.4,595.8 L430.9,593.4 L431.4,591.0 L431.9,588.5 L432.4,586.1 L432.8,583.7 L433.3,581.3 L433.8,578.8 L434.3,576.4 L434.8,574.0 L435.2,571.6 L435.7,569.2 L436.2,566.9 L436.7,564.5 L437.2,562.1 L437.7,559.8 L438.1,557.5 L438.6,555.2 L439.1,552.9 L439.6,550.6 L440.1,548.3 L440.5,546.1 L441.0,543.9 L441.5,541.7 L442.0,539.5 L442.5,537.4 L442.9,535.3 L443.4,533.2 L443.9,531.1 L444.4,529.1 L444.9,527.1 L445.4,525.1 L445.8,523.2 L446.3,521.3 L446.8,519.4 L447.3,517.5 L447.8,515.7 L448.2,514.0 L448.7,512.2 L449.2,510.5 L449.7,508.9 L450.2,507.3 L450.6,505.7 L451.1,504.2 L451.6,502.7 L452.1,501.2 L452.6,499.8 L453.0,498.4 L453.5,497.1 L454.0,495.9 L454.5,494.6 L455.0,493.4 L455.5,492.3 L455.9,491.2 L456.4,490.2 L456.9,489.2 L457.4,488.2 L457.9,487.3 L458.3,486.5 L458.8,485.7 L459.3,485.0 L459.8,484.3 L460.3,483.6 L460.7,483.1 L461.2,482.5 L461.7,482.0 L462.2,481.6 L462.7,481.2 L463.1,480.9 L463.6,480.6 L464.1,480.4 L464.6,480.2 L465.1,480.1 L465.6,480.1 L466.0,480.1 L466.5,480.1 L467.0,480.2 L467.5,480.4 L468.0,480.6 L468.4,480.8 L468.9,481.1 L469.4,481.5 L469.9,481.9 L470.4,482.4 L470.8,482.9 L471.3,483.5 L471.8,484.1 L472.3,484.8 L472.8,485.5 L473.2,486.3 L473.7,487.1 L474.2,488.0 L474.7,489.0 L475.2,489.9 L475.7,491.0 L476.1,492.0 L476.6,493.2 L477.1,494.3 L477.6,495.6 L478.1,496.8 L478.5,498.1 L479.0,499.5 L479.5,500.9 L480.0,502.3 L480.5,503.8 L480.9,505.3 L481.4,506.9 L481.9,508.5 L482.4,510.1 L482.9,511.8 L483.3,513.6 L483.8,515.3 L484.3,517.1 L484.8,519.0 L485.3,520.8 L485.8,522.7 L486.2,524.7 L486.7,526.6 L487.2,528.6 L487.7,530.6 L488.2,532.7 L488.6,534.8 L489.1,536.9 L489.6,539.0 L490.1,541.2 L490.6,543.4 L491.0,545.6 L491.5,547.8 L492.0,550.1 L492.5,552.3 L493.0,554.6 L493.4,556.9 L493.9,559.2 L494.4,561.6 L494.9,563.9 L495.4,566.3 L495.9,568.7 L496.3,571.1 L496.8,573.5 L497.3,575.9 L497.8,578.3 L498.3,580.7 L498.7,583.1 L499.2,585.5 L499.7,588.0 L500.2,590.4 L500.7,592.8 L501.1,595.2 L501.6,597.7 L502.1,600.1 L502.6,602.5 L503.1,604.9 L503.6,607.3 L504.0,609.7 L504.5,612.1 L505.0,614.5 L505.5,616.8 L506.0,619.2 L506.4,621.5 L506.9,623.9 L507.4,626.2 L507.9,628.5 L508.4,630.7 L508.8,633.0 L509.3,635.2 L509.8,637.4 L510.3,639.6 L510.8,641.8 L511.2,643.9 L511.7,646.0 L512.2,648.1 L512.7,650.2 L513.2,652.2 L513.7,654.2 L514.1,656.2 L514.6,658.1 L515.1,660.0 L515.6,661.9 L516.1,663.7 L516.5,665.5 L517.0,667.3 L517.5,669.0 L518.0,670.7 L518.5,672.3 L518.9,674.0 L519.4,675.5 L519.9,677.1 L520.4,678.5 L520.9,680.0 L521.3,681.4 L521.8,682.7 L522.3,684.1 L522.8,685.3 L523.3,686.6 L523.8,687.7 L524.2,688.9 L524.7,689.9 L525.2,691.0 L525.7,692.0 L526.2,692.9 L526.6,693.8 L527.1,694.6 L527.6,695.4 L528.1,696.1 L528.6,696.8 L529.0,697.4 L529.5,698.0 L530.0,698.6 L530.5,699.0 L531.0,699.5 L531.4,699.8 L531.9,700.1 L532.4,700.4 L532.9,700.6 L533.4,700.8 L533.9,700.9 L534.3,700.9 L534.8,700.9 L535.3,700.9 L535.8,700.8 L536.3,700.6 L536.7,700.4 L537.2,700.1 L537.7,699.8 L538.2,699.4 L538.7,699.0 L539.1,698.5 L539.6,698.0 L540.1,697.4 L540.6,696.8 L541.1,696.1 L541.6,695.4 L542.0,694.6 L542.5,693.7 L543.0,692.8 L543.5,691.9 L544.0,690.9 L544.4,689.9 L544.9,688.8 L545.4,687.7 L545.9,686.5 L546.4,685.3 L546.8,684.0 L547.3,682.7 L547.8,681.3 L548.3,679.9 L548.8,678.5 L549.2,677.0 L549.7,675.4 L550.2,673.9 L550.7,672.3 L551.2,670.6 L551.7,668.9 L552.1,667.2 L552.6,665.4 L553.1,663.6 L553.6,661.8 L554.1,659.9 L554.5,658.0 L555.0,656.1 L555.5,654.1 L556.0,652.1 L556.5,650.1 L556.9,648.0 L557.4,645.9 L557.9,643.8 L558.4,641.7 L558.9,639.5 L559.3,637.3 L559.8,635.1 L560.3,632.9 L560.8,630.6 L561.3,628.3 L561.8,626.1 L562.2,623.7 L562.7,621.4 L563.2,619.1 L563.7,616.7 L564.2,614.4 L564.6,612.0 L565.1,609.6 L565.6,607.2 L566.1,604.8 L566.6,602.4 L567.0,600.0 L567.5,597.5 L568.0,595.1 L568.5,592.7 L569.0,590.3 L569.4,587.8 L569.9,585.4 L570.4,583.0 L570.9,580.6 L571.4,578.1 L571.9,575.7 L572.3,573.3 L572.8,570.9 L573.3,568.6 L573.8,566.2 L574.3,563.8 L574.7,561.5 L575.2,559.1 L575.7,556.8 L576.2,554.5 L576.7,552.2 L577.1,549.9 L577.6,547.7 L578.1,545.5 L578.6,543.3 L579.1,541.1 L579.5,538.9 L580.0,536.8 L580.5,534.7 L581.0,532.6 L581.5,530.5 L582.0,528.5 L582.4,526.5 L582.9,524.6 L583.4,522.6 L583.9,520.7 L584.4,518.9 L584.8,517.0 L585.3,515.2 L585.8,513.5 L586.3,511.8 L586.8,510.1 L587.2,508.4 L587.7,506.8 L588.2,505.3 L588.7,503.7 L589.2,502.2 L589.6,500.8 L590.1,499.4 L590.6,498.1 L591.1,496.8 L591.6,495.5 L592.1,494.3 L592.5,493.1 L593.0,492.0 L593.5,490.9 L594.0,489.9 L594.5,488.9 L594.9,488.0 L595.4,487.1 L595.9,486.3 L596.4,485.5 L596.9,484.8 L597.3,484.1 L597.8,483.5 L598.3,482.9 L598.8,482.4 L599.3,481.9 L599.8,481.5 L600.2,481.1 L600.7,480.8 L601.2,480.6 L601.7,480.4 L602.2,480.2 L602.6,480.1 L603.1,480.1 L603.6,480.1 L604.1,480.1 L604.6,480.2 L605.0,480.4 L605.5,480.6 L606.0,480.9 L606.5,481.2 L607.0,481.6 L607.4,482.1 L607.9,482.5 L608.4,483.1 L608.9,483.7 L609.4,484.3 L609.9,485.0 L610.3,485.8 L610.8,486.5 L611.3,487.4 L611.8,488.3 L612.3,489.2 L612.7,490.2 L613.2,491.3 L613.7,492.4 L614.2,493.5 L614.7,494.7 L615.1,495.9 L615.6,497.2 L616.1,498.5 L616.6,499.9 L617.1,501.3 L617.5,502.7 L618.0,504.2 L618.5,505.8 L619.0,507.4 L619.5,509.0 L620.0,510.6 L620.4,512.3 L620.9,514.1 L621.4,515.8 L621.9,517.6 L622.4,519.5 L622.8,521.4 L623.3,523.3 L623.8,525.2 L624.3,527.2 L624.8,529.2 L625.2,531.2 L625.7,533.3 L626.2,535.4 L626.7,537.5 L627.2,539.6 L627.6,541.8 L628.1,544.0 L628.6,546.2 L629.1,548.5 L629.6,550.7 L630.1,553.0 L630.5,555.3 L631.0,557.6 L631.5,559.9 L632.0,562.3 L632.5,564.6 L632.9,567.0 L633.4,569.4 L633.9,571.7 L634.4,574.1 L634.9,576.5 L635.3,579.0 L635.8,581.4 L636.3,583.8 L636.8,586.2 L637.3,588.7 L637.8,591.1 L638.2,593.5 L638.7,595.9 L639.2,598.4 L639.7,600.8 L640.2,603.2 L640.6,605.6 L641.1,608.0 L641.6,610.4 L642.1,612.8 L642.6,615.2 L643.0,617.5 L643.5,619.9 L644.0,622.2 L644.5,624.5 L645.0,626.8 L645.4,629.1 L645.9,631.4 L646.4,633.6 L646.9,635.8 L647.4,638.0 L647.9,640.2 L648.3,642.4 L648.8,644.5 L649.3,646.6 L649.8,648.7 L650.3,650.8 L650.7,652.8 L651.2,654.8 L651.7,656.7 L652.2,658.6 L652.7,660.5 L653.1,662.4 L653.6,664.2 L654.1,666.0 L654.6,667.8 L655.1,669.5 L655.5,671.2 L656.0,672.8 L656.5,674.4 L657.0,676.0 L657.5,677.5 L658.0,679.0 L658.4,680.4 L658.9,681.8 L659.4,683.1 L659.9,684.4 L660.4,685.7 L660.8,686.9 L661.3,688.1 L661.8,689.2 L662.3,690.2 L662.8,691.3 L663.2,692.2 L663.7,693.1 L664.2,694.0 L664.7,694.8 L665.2,695.6 L665.6,696.3 L666.1,697.0 L666.6,697.6 L667.1,698.2 L667.6,698.7 L668.1,699.2 L668.5,699.6 L669.0,699.9 L669.5,700.2 L670.0,700.5 L670.5,700.7 L670.9,700.8 L671.4,700.9 L671.9,700.9 L672.4,700.9 L672.9,700.9 L673.3,700.7 L673.8,700.6 L674.3,700.3 L674.8,700.0 L675.3,699.7 L675.7,699.3 L676.2,698.9 L676.7,698.4 L677.2,697.8 L677.7,697.2 L678.2,696.6 L678.6,695.9 L679.1,695.1 L679.6,694.3 L680.1,693.5 L680.6,692.6 L681.0,691.6 L681.5,690.6 L682.0,689.6 L682.5,688.5 L683.0,687.3 L683.4,686.1 L683.9,684.9 L684.4,683.6 L684.9,682.3 L685.4,680.9 L685.9,679.5 L686.3,678.0 L686.8,676.5 L687.3,675.0 L687.8,673.4 L688.3,671.8 L688.7,670.1 L689.2,668.4 L689.7,666.7 L690.2,664.9 L690.7,663.1 L691.1,661.3 L691.6,659.4 L692.1,657.5 L692.6,655.5 L693.1,653.5 L693.5,651.5 L694.0,649.5 L694.5,647.4 L695.0,645.3 L695.5,643.2 L696.0,641.1 L696.4,638.9 L696.9,636.7 L697.4,634.5 L697.9,632.2 L698.4,630.0 L698.8,627.7 L699.3,625.4 L699.8,623.1 L700.3,620.8 L700.8,618.4 L701.2,616.1 L701.7,613.7 L702.2,611.3 L702.7,608.9 L703.2,606.5 L703.6,604.1 L704.1,601.7 L704.6,599.3 L705.1,596.9 L705.6,594.4 L706.1,592.0 L706.5,589.6 L707.0,587.1 L707.5,584.7 L708.0,582.3 L708.5,579.9 L708.9,577.5 L709.4,575.1 L709.9,572.6 L710.4,570.3 L710.9,567.9 L711.3,565.5 L711.8,563.1 L712.3,560.8 L712.8,558.5 L713.3,556.1 L713.7,553.8 L714.2,551.6 L714.7,549.3 L715.2,547.1 L715.7,544.8 L716.2,542.6 L716.6,540.5 L717.1,538.3 L717.6,536.2 L718.1,534.1 L718.6,532.0 L719.0,530.0 L719.5,527.9 L720.0,526.0 L720.5,524.0 L721.0,522.1 L721.4,520.2 L721.9,518.3 L722.4,516.5 L722.9,514.7 L723.4,513.0 L723.8,511.3 L724.3,509.6 L724.8,508.0 L725.3,506.4 L725.8,504.8 L726.3,503.3 L726.7,501.8 L727.2,500.4 L727.7,499.0 L728.2,497.7 L728.7,496.4 L729.1,495.1 L729.6,493.9 L730.1,492.8 L730.6,491.7 L731.1,490.6 L731.5,489.6 L732.0,488.6 L732.5,487.7 L733.0,486.9 L733.5,486.0 L734.0,485.3 L734.4,484.6 L734.9,483.9 L735.4,483.3 L735.9,482.7 L736.4,482.2 L736.8,481.8 L737.3,481.4 L737.8,481.0 L738.3,480.7 L738.8,480.5 L739.2,480.3 L739.7,480.2 L740.2,480.1 L740.7,480.1 L741.2,480.1 L741.6,480.2 L742.1,480.3 L742.6,480.5 L743.1,480.7 L743.6,481.0 L744.1,481.3 L744.5,481.7 L745.0,482.2 L745.5,482.7 L746.0,483.2 L746.5,483.8 L746.9,484.5 L747.4,485.2 L747.9,486.0 L748.4,486.8 L748.9,487.6 L749.3,488.6 L749.8,489.5 L750.3,490.5 L750.8,491.6 L751.3,492.7 L751.7,493.8 L752.2,495.0 L752.7,496.3 L753.2,497.6 L753.7,498.9 L754.2,500.3 L754.6,501.7 L755.1,503.2 L755.6,504.7 L756.1,506.2 L756.6,507.8 L757.0,509.4 L757.5,511.1 L758.0,512.8 L758.5,514.6 L759.0,516.3 L759.4,518.2 L759.9,520.0 L760.4,521.9 L760.9,523.8 L761.4,525.8 L761.8,527.8 L762.3,529.8 L762.8,531.8 L763.3,533.9 L763.8,536.0 L764.3,538.1 L764.7,540.3 L765.2,542.4 L765.7,544.6 L766.2,546.9 L766.7,549.1 L767.1,551.4 L767.6,553.6 L768.1,555.9 L768.6,558.2 L769.1,560.6 L769.5,562.9 L770.0,565.3 L770.5,567.7 L771.0,570.0 L771.5,572.4 L771.9,574.8 L772.4,577.2 L772.9,579.6 L773.4,582.1 L773.9,584.5 L774.4,586.9 L774.8,589.3 L775.3,591.8 L775.8,594.2 L776.3,596.6 L776.8,599.1 L777.2,601.5 L777.7,603.9 L778.2,606.3 L778.7,608.7 L779.2,611.1 L779.6,613.5 L780.1,615.8 L780.6,618.2 L781.1,620.5 L781.6,622.9 L782.0,625.2 L782.5,627.5 L783.0,629.8 L783.5,632.0 L784.0,634.3 L784.5,636.5 L784.9,638.7 L785.4,640.8 L785.9,643.0 L786.4,645.1 L786.9,647.2 L787.3,649.3 L787.8,651.3 L788.3,653.3 L788.8,655.3 L789.3,657.3 L789.7,659.2 L790.2,661.1 L790.7,662.9 L791.2,664.7 L791.7,666.5 L792.2,668.3 L792.6,670.0 L793.1,671.6 L793.6,673.3 L794.1,674.9 L794.6,676.4 L795.0,677.9 L795.5,679.4 L796.0,680.8 L796.5,682.2 L797.0,683.5 L797.4,684.8 L797.9,686.0 L798.4,687.2 L798.9,688.4 L799.4,689.5 L799.8,690.5 L800.3,691.5 L800.8,692.5 L801.3,693.4 L801.8,694.3 L802.3,695.1 L802.7,695.8 L803.2,696.5 L803.7,697.2 L804.2,697.8 L804.7,698.3 L805.1,698.8 L805.6,699.3 L806.1,699.7 L806.6,700.0 L807.1,700.3 L807.5,700.5 L808.0,700.7 L808.5,700.8 L809.0,700.9 L809.5,700.9 L809.9,700.9 L810.4,700.8 L810.9,700.7 L811.4,700.5 L811.9,700.3 L812.4,700.0 L812.8,699.6 L813.3,699.2 L813.8,698.7 L814.3,698.2 L814.8,697.7 L815.2,697.1 L815.7,696.4 L816.2,695.7 L816.7,694.9 L817.2,694.1 L817.6,693.2 L818.1,692.3 L818.6,691.3 L819.1,690.3 L819.6,689.3 L820.0,688.2 L820.5,687.0 L821.0,685.8 L821.5,684.5 L822.0,683.3 L822.5,681.9 L822.9,680.5 L823.4,679.1 L823.9,677.6 L824.4,676.1 L824.9,674.6 L825.3,673.0 L825.8,671.3 L826.3,669.7 L826.8,667.9 L827.3,666.2 L827.7,664.4 L828.2,662.6 L828.7,660.7 L829.2,658.8 L829.7,656.9 L830.2,654.9 L830.6,653.0 L831.1,650.9 L831.6,648.9 L832.1,646.8 L832.6,644.7 L833.0,642.6 L833.5,640.4 L834.0,638.3 L834.5,636.1 L835.0,633.8 L835.4,631.6 L835.9,629.3 L836.4,627.0 L836.9,624.7 L837.4,622.4 L837.8,620.1 L838.3,617.7 L838.8,615.4 L839.3,613.0 L839.8,610.6 L840.3,608.2 L840.7,605.8 L841.2,603.4 L841.7,601.0 L842.2,598.6 L842.7,596.2 L843.1,593.7 L843.6,591.3 L844.1,588.9 L844.6,586.5 L845.1,584.0 L845.5,581.6 L846.0,579.2 L846.5,576.8 L847.0,574.4 L847.5,572.0 L847.9,569.6 L848.4,567.2 L848.9,564.8 L849.4,562.5 L849.9,560.1 L850.4,557.8 L850.8,555.5 L851.3,553.2 L851.8,550.9 L852.3,548.7 L852.8,546.4 L853.2,544.2 L853.7,542.0 L854.2,539.8 L854.7,537.7 L855.2,535.6 L855.6,533.5 L856.1,531.4 L856.6,529.4 L857.1,527.4 L857.6,525.4 L858.0,523.4 L858.5,521.5 L859.0,519.7 L859.5,517.8 L860.0,516.0 L860.5,514.2 L860.9,512.5 L861.4,510.8 L861.9,509.1 L862.4,507.5 L862.9,505.9 L863.3,504.4 L863.8,502.9 L864.3,501.4 L864.8,500.0 L865.3,498.6 L865.7,497.3 L866.2,496.0 L866.7,494.8 L867.2,493.6 L867.7,492.5 L868.1,491.4 L868.6,490.3 L869.1,489.3 L869.6,488.4 L870.1,487.5 L870.6,486.6 L871.0,485.8 L871.5,485.1 L872.0,484.4 L872.5,483.7 L873.0,483.1 L873.4,482.6 L873.9,482.1 L874.4,481.7 L874.9,481.3 L875.4,480.9 L875.8,480.7 L876.3,480.4 L876.8,480.3 L877.3,480.1 L877.8,480.1 L878.2,480.1 L878.7,480.1 L879.2,480.2 L879.7,480.3 L880.2,480.5 L880.7,480.8 L881.1,481.1 L881.6,481.5 L882.1,481.9 L882.6,482.3 L883.1,482.8 L883.5,483.4 L884.0,484.0 L884.5,484.7 L885.0,485.4 L885.5,486.2 L885.9,487.0 L886.4,487.9 L886.9,488.8 L887.4,489.8 L887.9,490.8 L888.4,491.9 L888.8,493.0 L889.3,494.2 L889.8,495.4 L890.3,496.6 L890.8,497.9 L891.2,499.3 L891.7,500.7 L892.2,502.1 L892.7,503.6 L893.2,505.1 L893.6,506.7 L894.1,508.3 L894.6,509.9 L895.1,511.6 L895.6,513.3 L896.0,515.1 L896.5,516.9 L897.0,518.7 L897.5,520.5 L898.0,522.4 L898.5,524.4 L898.9,526.3 L899.4,528.3 L899.9,530.3 L900.4,532.4 L900.9,534.5 L901.3,536.6 L901.8,538.7 L902.3,540.9 L902.8,543.1 L903.3,545.3 L903.7,547.5 L904.2,549.7 L904.7,552.0 L905.2,554.3 L905.7,556.6 L906.1,558.9 L906.6,561.2 L907.1,563.6 L907.6,566.0 L908.1,568.3 L908.6,570.7 L909.0,573.1 L909.5,575.5 L910.0,577.9 L910.5,580.3 L911.0,582.8 L911.4,585.2 L911.9,587.6 L912.4,590.0 L912.9,592.5 L913.4,594.9 L913.8,597.3 L914.3,599.7 L914.8,602.2 L915.3,604.6 L915.8,607.0 L916.2,609.4 L916.7,611.8 L917.2,614.1 L917.7,616.5 L918.2,618.9 L918.7,621.2 L919.1,623.5 L919.6,625.8 L920.1,628.1 L920.6,630.4 L921.1,632.7 L921.5,634.9 L922.0,637.1 L922.5,639.3 L923.0,641.5 L923.5,643.6 L923.9,645.7 L924.4,647.8 L924.9,649.9 L925.4,651.9 L925.9,653.9 L926.4,655.9 L926.8,657.8 L927.3,659.7 L927.8,661.6 L928.3,663.5 L928.8,665.3 L929.2,667.0 L929.7,668.8 L930.2,670.5 L930.7,672.1 L931.2,673.7 L931.6,675.3 L932.1,676.8 L932.6,678.3 L933.1,679.8 L933.6,681.2 L934.0,682.6 L934.5,683.9 L935.0,685.1 L935.5,686.4 L936.0,687.6 L936.5,688.7 L936.9,689.8 L937.4,690.8 L937.9,691.8 L938.4,692.8 L938.9,693.7 L939.3,694.5 L939.8,695.3 L940.3,696.0 L940.8,696.7 L941.3,697.4 L941.7,697.9 L942.2,698.5 L942.7,699.0 L943.2,699.4 L943.7,699.8 L944.1,700.1 L944.6,700.4 L945.1,700.6 L945.6,700.8 L946.1,700.9 L946.6,700.9 L947.0,700.9 L947.5,700.9 L948.0,700.8 L948.5,700.6 L949.0,700.4 L949.4,700.2 L949.9,699.9 L950.4,699.5 L950.9,699.1 L951.4,698.6 L951.8,698.1 L952.3,697.5 L952.8,696.9 L953.3,696.2 L953.8,695.5 L954.2,694.7 L954.7,693.9 L955.2,693.0 L955.7,692.0 L956.2,691.1 L956.7,690.0 L957.1,689.0 L957.6,687.8 L958.1,686.7 L958.6,685.4 L959.1,684.2 L959.5,682.9 L960.0,681.5 L960.5,680.1 L961.0,678.7 L961.5,677.2 L961.9,675.7 L962.4,674.1 L962.9,672.5 L963.4,670.9 L963.9,669.2 L964.3,667.4 L964.8,665.7 L965.3,663.9 L965.8,662.0 L966.3,660.2 L966.8,658.3 L967.2,656.3 L967.7,654.4 L968.2,652.4 L968.7,650.4 L969.2,648.3 L969.6,646.2 L970.1,644.1 L970.6,642.0 L971.1,639.8 L971.6,637.6 L972.0,635.4 L972.5,633.2 L973.0,630.9 L973.5,628.7 L974.0,626.4 L974.4,624.1 L974.9,621.8 L975.4,619.4 L975.9,617.1 L976.4,614.7 L976.9,612.3 L977.3,609.9 L977.8,607.5 L978.3,605.1 L978.8,602.7 L979.3,600.3 L979.7,597.9 L980.2,595.5 L980.7,593.0 L981.2,590.6 L981.7,588.2 L982.1,585.8 L982.6,583.3 L983.1,580.9 L983.6,578.5 L984.1,576.1 L984.6,573.7 L985.0,571.3 L985.5,568.9 L986.0,566.5 L986.5,564.2 L987.0,561.8 L987.4,559.5 L987.9,557.1 L988.4,554.8 L988.9,552.5 L989.4,550.3 L989.8,548.0 L990.3,545.8 L990.8,543.6 L991.3,541.4 L991.8,539.2 L992.2,537.1 L992.7,535.0 L993.2,532.9 L993.7,530.8 L994.2,528.8 L994.7,526.8 L995.1,524.8 L995.6,522.9 L996.1,521.0 L996.6,519.1 L997.1,517.3 L997.5,515.5 L998.0,513.7 L998.5,512.0" stroke="#40F040"/><path d="M36.5,590.5 L37.0,590.5 L37.5,590.4 L37.9,590.2 L38.4,589.9 L38.9,589.6 L39.4,589.2 L39.9,588.7 L40.3,588.2 L40.8,587.6 L41.3,587.0 L41.8,586.3 L42.3,585.5 L42.8,584.7 L43.2,583.8 L43.7,582.9 L44.2,581.9 L44.7,580.9 L45.2,579.9 L45.6,578.7 L46.1,577.6 L46.6,576.4 L47.1,575.1 L47.6,573.8 L48.0,572.5 L48.5,571.2 L49.0,569.8 L49.5,568.4 L50.0,566.9 L50.4,565.4 L50.9,563.9 L51.4,562.4 L51.9,560.8 L52.4,559.2 L52.9,557.6 L53.3,556.0 L53.8,554.3 L54.3,552.7 L54.8,551.0 L55.3,549.3 L55.7,547.6 L56.2,545.9 L56.7,544.1 L57.2,542.4 L57.7,540.7 L58.1,538.9 L58.6,537.2 L59.1,535.4 L59.6,533.7 L60.1,531.9 L60.5,530.2 L61.0,528.4 L61.5,526.7 L62.0,525.0 L62.5,523.2 L63.0,521.5 L63.4,519.8 L63.9,518.1 L64.4,516.5 L64.9,514.8 L65.4,513.1 L65.8,511.5 L66.3,509.9 L66.8,508.3 L67.3,506.7 L67.8,505.2 L68.2,503.7 L68.7,502.2 L69.2,500.7 L69.7,499.2 L70.2,497.8 L70.7,496.4 L71.1,495.1 L71.6,493.7 L72.1,492.4 L72.6,491.1 L73.1,489.9 L73.5,488.7 L74.0,487.5 L74.5,486.4 L75.0,485.3 L75.5,484.3 L75.9,483.2 L76.4,482.3 L76.9,481.3 L77.4,480.4 L77.9,479.6 L78.3,478.8 L78.8,478.0 L79.3,477.3 L79.8,476.6 L80.3,476.0 L80.8,475.4 L81.2,474.8 L81.7,474.3 L82.2,473.9 L82.7,473.5 L83.2,473.1 L83.6,472.8 L84.1,472.5 L84.6,472.3 L85.1,472.1 L85.6,472.0 L86.0,472.0 L86.5,471.9 L87.0,472.0 L87.5,472.1 L88.0,472.2 L88.4,472.4 L88.9,472.6 L89.4,472.9 L89.9,473.2 L90.4,473.6 L90.9,474.0 L91.3,474.5 L91.8,475.0 L92.3,475.6 L92.8,476.3 L93.3,476.9 L93.7,477.7 L94.2,478.4 L94.7,479.3 L95.2,480.2 L95.7,481.1 L96.1,482.1 L96.6,483.1 L97.1,484.1 L97.6,485.3 L98.1,486.4 L98.5,487.6 L99.0,488.9 L99.5,490.2 L100.0,491.5 L100.5,492.9 L101.0,494.3 L101.4,495.8 L101.9,497.3 L102.4,498.9 L102.9,500.5 L103.4,502.1 L103.8,503.8 L104.3,505.5 L104.8,507.2 L105.3,509.0 L105.8,510.9 L106.2,512.7 L106.7,514.6 L107.2,516.5 L107.7,518.5 L108.2,520.5 L108.6,522.5 L109.1,524.6 L109.6,526.6 L110.1,528.8 L110.6,530.9 L111.1,533.1 L111.5,535.3 L112.0,537.5 L112.5,539.7 L113.0,542.0 L113.5,544.2 L113.9,546.6 L114.4,548.9 L114.9,551.2 L115.4,553.6 L115.9,555.9 L116.3,558.3 L116.8,560.7 L117.3,563.1 L117.8,565.6 L118.3,568.0 L118.8,570.4 L119.2,572.9 L119.7,575.3 L120.2,577.8 L120.7,580.3 L121.2,582.8 L121.6,585.2 L122.1,587.7 L122.6,590.2 L123.1,592.7 L123.6,595.1 L124.0,597.6 L124.5,600.1 L125.0,602.5 L125.5,605.0 L126.0,607.4 L126.4,609.8 L126.9,612.3 L127.4,614.7 L127.9,617.1 L128.4,619.4 L128.9,621.8 L129.3,624.2 L129.8,626.5 L130.3,628.8 L130.8,631.1 L131.3,633.4 L131.7,635.6 L132.2,637.9 L132.7,640.1 L133.2,642.3 L133.7,644.4 L134.1,646.6 L134.6,648.7 L135.1,650.7 L135.6,652.8 L136.1,654.8 L136.5,656.8 L137.0,658.7 L137.5,660.6 L138.0,662.5 L138.5,664.4 L139.0,666.2 L139.4,667.9 L139.9,669.7 L140.4,671.4 L140.9,673.0 L141.4,674.6 L141.8,676.2 L142.3,677.7 L142.8,679.2 L143.3,680.7 L143.8,682.1 L144.2,683.4 L144.7,684.7 L145.2,686.0 L145.7,687.2 L146.2,688.4 L146.6,689.5 L147.1,690.6 L147.6,691.6 L148.1,692.6 L148.6,693.5 L149.1,694.4 L149.5,695.2 L150.0,696.0 L150.5,696.7 L151.0,697.4 L151.5,698.0 L151.9,698.6 L152.4,699.1 L152.9,699.5 L153.4,699.9 L153.9,700.3 L154.3,700.6 L154.8,700.8 L155.3,701.0 L155.8,701.2 L156.3,701.3 L156.8,701.3 L157.2,701.3 L157.7,701.2 L158.2,701.1 L158.7,700.9 L159.2,700.6 L159.6,700.4 L160.1,700.0 L160.6,699.6 L161.1,699.2 L161.6,698.7 L162.0,698.1 L162.5,697.5 L163.0,696.8 L163.5,696.1 L164.0,695.4 L164.4,694.6 L164.9,693.7 L165.4,692.8 L165.9,691.8 L166.4,690.8 L166.9,689.7 L167.3,688.6 L167.8,687.5 L168.3,686.3 L168.8,685.0 L169.3,683.7 L169.7,682.4 L170.2,681.0 L170.7,679.6 L171.2,678.1 L171.7,676.6 L172.1,675.0 L172.6,673.4 L173.1,671.8 L173.6,670.1 L174.1,668.4 L174.5,666.6 L175.0,664.8 L175.5,663.0 L176.0,661.2 L176.5,659.3 L177.0,657.3 L177.4,655.4 L177.9,653.4 L178.4,651.3 L178.9,649.3 L179.4,647.2 L179.8,645.1 L180.3,643.0 L180.8,640.8 L181.3,638.6 L181.8,636.4 L182.2,634.2 L182.7,631.9 L183.2,629.6 L183.7,627.4 L184.2,625.0 L184.6,622.7 L185.1,620.4 L185.6,618.0 L186.1,615.6 L186.6,613.3 L187.1,610.9 L187.5,608.5 L188.0,606.0 L188.5,603.6 L189.0,601.2 L189.5,598.8 L189.9,596.3 L190.4,593.9 L190.9,591.5 L191.4,589.0 L191.9,586.6 L192.3,584.1 L192.8,581.7 L193.3,579.3 L193.8,576.8 L194.3,574.4 L194.7,572.0 L195.2,569.6 L195.7,567.2 L196.2,564.8 L196.7,562.5 L197.2,560.1 L197.6,557.8 L198.1,555.4 L198.6,553.1 L199.1,550.8 L199.6,548.6 L200.0,546.3 L200.5,544.1 L201.0,541.9 L201.5,539.7 L202.0,537.5 L202.4,535.4 L202.9,533.3 L203.4,531.2 L203.9,529.2 L204.4,527.1 L204.9,525.2 L205.3,523.2 L205.8,521.3 L206.3,519.4 L206.8,517.5 L207.3,515.7 L207.7,513.9 L208.2,512.2 L208.7,510.4 L209.2,508.8 L209.7,507.1 L210.1,505.5 L210.6,504.0 L211.1,502.5 L211.6,501.0 L212.1,499.6 L212.5,498.2 L213.0,496.9 L213.5,495.6 L214.0,494.3 L214.5,493.1 L215.0,492.0 L215.4,490.9 L215.9,489.8 L216.4,488.8 L216.9,487.9 L217.4,486.9 L217.8,486.1 L218.3,485.3 L218.8,484.5 L219.3,483.8 L219.8,483.2 L220.2,482.6 L220.7,482.0 L221.2,481.5 L221.7,481.1 L222.2,480.7 L222.6,480.3 L223.1,480.1 L223.6,479.8 L224.1,479.6 L224.6,479.5 L225.1,479.4 L225.5,479.4 L226.0,479.5 L226.5,479.6 L227.0,479.7 L227.5,479.9 L227.9,480.1 L228.4,480.4 L228.9,480.8 L229.4,481.2 L229.9,481.7 L230.3,482.2 L230.8,482.8 L231.3,483.4 L231.8,484.0 L232.3,484.8 L232.7,485.5 L233.2,486.4 L233.7,487.2 L234.2,488.2 L234.7,489.1 L235.2,490.2 L235.6,491.2 L236.1,492.4 L236.6,493.5 L237.1,494.7 L237.6,496.0 L238.0,497.3 L238.5,498.7 L239.0,500.1 L239.5,501.5 L240.0,503.0 L240.4,504.5 L240.9,506.1 L241.4,507.7 L241.9,509.3 L242.4,511.0 L242.8,512.7 L243.3,514.5 L243.8,516.3 L244.3,518.1 L244.8,520.0 L245.3,521.9 L245.7,523.8 L246.2,525.8 L246.7,527.8 L247.2,529.8 L247.7,531.9 L248.1,534.0 L248.6,536.1 L249.1,538.3 L249.6,540.4 L250.1,542.6 L250.5,544.8 L251.0,547.1 L251.5,549.3 L252.0,551.6 L252.5,553.9 L253.0,556.2 L253.4,558.5 L253.9,560.9 L254.4,563.3 L254.9,565.6 L255.4,568.0 L255.8,570.4 L256.3,572.8 L256.8,575.2 L257.3,577.7 L257.8,580.1 L258.2,582.5 L258.7,585.0 L259.2,587.4 L259.7,589.8 L260.2,592.3 L260.6,594.7 L261.1,597.2 L261.6,599.6 L262.1,602.0 L262.6,604.5 L263.1,606.9 L263.5,609.3 L264.0,611.7 L264.5,614.1 L265.0,616.5 L265.5,618.8 L265.9,621.2 L266.4,623.5 L266.9,625.9 L267.4,628.2 L267.9,630.5 L268.3,632.7 L268.8,635.0 L269.3,637.2 L269.8,639.4 L270.3,641.6 L270.7,643.7 L271.2,645.9 L271.7,648.0 L272.2,650.0 L272.7,652.1 L273.2,654.1 L273.6,656.1 L274.1,658.1 L274.6,660.0 L275.1,661.9 L275.6,663.7 L276.0,665.5 L276.5,667.3 L277.0,669.1 L277.5,670.8 L278.0,672.4 L278.4,674.1 L278.9,675.7 L279.4,677.2 L279.9,678.7 L280.4,680.2 L280.8,681.6 L281.3,683.0 L281.8,684.3 L282.3,685.6 L282.8,686.8 L283.3,688.0 L283.7,689.2 L284.2,690.3 L284.7,691.3 L285.2,692.3 L285.7,693.3 L286.1,694.2 L286.6,695.0 L287.1,695.8 L287.6,696.6 L288.1,697.3 L288.5,697.9 L289.0,698.5 L289.5,699.0 L290.0,699.5 L290.5,700.0 L290.9,700.4 L291.4,700.7 L291.9,701.0 L292.4,701.2 L292.9,701.4 L293.4,701.5 L293.8,701.6 L294.3,701.6 L294.8,701.5 L295.3,701.4 L295.8,701.3 L296.2,701.1 L296.7,700.8 L297.2,700.5 L297.7,700.1 L298.2,699.7 L298.6,699.2 L299.1,698.7 L299.6,698.2 L300.1,697.5 L300.6,696.8 L301.1,696.1 L301.5,695.3 L302.0,694.5 L302.5,693.6 L303.0,692.7 L303.5,691.7 L303.9,690.7 L304.4,689.6 L304.9,688.5 L305.4,687.3 L305.9,686.1 L306.3,684.8 L306.8,683.5 L307.3,682.1 L307.8,680.7 L308.3,679.3 L308.7,677.8 L309.2,676.3 L309.7,674.7 L310.2,673.1 L310.7,671.4 L311.2,669.7 L311.6,668.0 L312.1,666.2 L312.6,664.4 L313.1,662.6 L313.6,660.7 L314.0,658.8 L314.5,656.9 L315.0,654.9 L315.5,652.9 L316.0,650.9 L316.4,648.8 L316.9,646.7 L317.4,644.6 L317.9,642.4 L318.4,640.3 L318.8,638.1 L319.3,635.8 L319.8,633.6 L320.3,631.3 L320.8,629.1 L321.3,626.8 L321.7,624.4 L322.2,622.1 L322.7,619.8 L323.2,617.4 L323.7,615.0 L324.1,612.6 L324.6,610.2 L325.1,607.8 L325.6,605.4 L326.1,603.0 L326.5,600.6 L327.0,598.1 L327.5,595.7 L328.0,593.2 L328.5,590.8 L328.9,588.4 L329.4,585.9 L329.9,583.5 L330.4,581.0 L330.9,578.6 L331.4,576.2 L331.8,573.8 L332.3,571.4 L332.8,569.0 L333.3,566.6 L333.8,564.2 L334.2,561.8 L334.7,559.5 L335.2,557.1 L335.7,554.8 L336.2,552.5 L336.6,550.2 L337.1,548.0 L337.6,545.7 L338.1,543.5 L338.6,541.3 L339.0,539.1 L339.5,537.0 L340.0,534.8 L340.5,532.7 L341.0,530.7 L341.5,528.6 L341.9,526.6 L342.4,524.6 L342.9,522.7 L343.4,520.8 L343.9,518.9 L344.3,517.0 L344.8,515.2 L345.3,513.4 L345.8,511.7 L346.3,510.0 L346.7,508.3 L347.2,506.7 L347.7,505.1 L348.2,503.6 L348.7,502.1 L349.2,500.6 L349.6,499.2 L350.1,497.8 L350.6,496.5 L351.1,495.2 L351.6,494.0 L352.0,492.8 L352.5,491.7 L353.0,490.6 L353.5,489.5 L354.0,488.6 L354.4,487.6 L354.9,486.7 L355.4,485.9 L355.9,485.1 L356.4,484.3 L356.8,483.6 L357.3,483.0 L357.8,482.4 L358.3,481.9 L358.8,481.4 L359.3,481.0 L359.7,480.6 L360.2,480.3 L360.7,480.0 L361.2,479.8 L361.7,479.6 L362.1,479.5 L362.6,479.4 L363.1,479.4 L363.6,479.5 L364.1,479.6 L364.5,479.8 L365.0,480.0 L365.5,480.2 L366.0,480.5 L366.5,480.9 L366.9,481.3 L367.4,481.8 L367.9,482.4 L368.4,482.9 L368.9,483.6 L369.4,484.3 L369.8,485.0 L370.3,485.8 L370.8,486.6 L371.3,487.5 L371.8,488.4 L372.2,489.4 L372.7,490.5 L373.2,491.6 L373.7,492.7 L374.2,493.9 L374.6,495.1 L375.1,496.4 L375.6,497.7 L376.1,499.1 L376.6,500.5 L377.0,501.9 L377.5,503.4 L378.0,504.9 L378.5,506.5 L379.0,508.1 L379.5,509.8 L379.9,511.5 L380.4,513.2 L380.9,515.0 L381.4,516.8 L381.9,518.7 L382.3,520.5 L382.8,522.5 L383.3,524.4 L383.8,526.4 L384.3,528.4 L384.7,530.4 L385.2,532.5 L385.7,534.6 L386.2,536.7 L386.7,538.9 L387.1,541.1 L387.6,543.2 L388.1,545.5 L388.6,547.7 L389.1,550.0 L389.6,552.3 L390.0,554.6 L390.5,556.9 L391.0,559.2 L391.5,561.6 L392.0,563.9 L392.4,566.3 L392.9,568.7 L393.4,571.1 L393.9,573.5 L394.4,575.9 L394.8,578.4 L395.3,580.8 L395.8,583.2 L396.3,585.7 L396.8,588.1 L397.2,590.5 L397.7,593.0 L398.2,595.4 L398.7,597.9 L399.2,600.3 L399.7,602.7 L400.1,605.2 L400.6,607.6 L401.1,610.0 L401.6,612.4 L402.1,614.8 L402.5,617.1 L403.0,619.5 L403.5,621.9 L404.0,624.2 L404.5,626.5 L404.9,628.8 L405.4,631.1 L405.9,633.4 L406.4,635.6 L406.9,637.8 L407.4,640.0 L407.8,642.2 L408.3,644.3 L408.8,646.5 L409.3,648.6 L409.8,650.6 L410.2,652.7 L410.7,654.7 L411.2,656.7 L411.7,658.6 L412.2,660.5 L412.6,662.4 L413.1,664.2 L413.6,666.1 L414.1,667.8 L414.6,669.6 L415.0,671.3 L415.5,672.9 L416.0,674.5 L416.5,676.1 L417.0,677.6 L417.5,679.1 L417.9,680.6 L418.4,682.0 L418.9,683.4 L419.4,684.7 L419.9,685.9 L420.3,687.2 L420.8,688.3 L421.3,689.5 L421.8,690.6 L422.3,691.6 L422.7,692.6 L423.2,693.5 L423.7,694.4 L424.2,695.2 L424.7,696.0 L425.1,696.8 L425.6,697.5 L426.1,698.1 L426.6,698.7 L427.1,699.2 L427.6,699.7 L428.0,700.1 L428.5,700.5 L429.0,700.8 L429.5,701.0 L430.0,701.3 L430.4,701.4 L430.9,701.5 L431.4,701.6 L431.9,701.6 L432.4,701.5 L432.8,701.4 L433.3,701.2 L433.8,701.0 L434.3,700.7 L434.8,700.4 L435.2,700.0 L435.7,699.6 L436.2,699.1 L436.7,698.6 L437.2,698.0 L437.7,697.3 L438.1,696.6 L438.6,695.9 L439.1,695.1 L439.6,694.3 L440.1,693.4 L440.5,692.4 L441.0,691.4 L441.5,690.4 L442.0,689.3 L442.5,688.1 L442.9,687.0 L443.4,685.7 L443.9,684.4 L444.4,683.1 L444.9,681.7 L445.4,680.3 L445.8,678.9 L446.3,677.4 L446.8,675.8 L447.3,674.2 L447.8,672.6 L448.2,671.0 L448.7,669.3 L449.2,667.5 L449.7,665.7 L450.2,663.9 L450.6,662.1 L451.1,660.2 L451.6,658.3 L452.1,656.3 L452.6,654.3 L453.0,652.3 L453.5,650.3 L454.0,648.2 L454.5,646.1 L455.0,644.0 L455.5,641.8 L455.9,639.6 L456.4,637.4 L456.9,635.2 L457.4,633.0 L457.9,630.7 L458.3,628.4 L458.8,626.1 L459.3,623.8 L459.8,621.4 L460.3,619.1 L460.7,616.7 L461.2,614.3 L461.7,612.0 L462.2,609.6 L462.7,607.1 L463.1,604.7 L463.6,602.3 L464.1,599.9 L464.6,597.4 L465.1,595.0 L465.6,592.6 L466.0,590.1 L466.5,587.7 L467.0,585.2 L467.5,582.8 L468.0,580.4 L468.4,577.9 L468.9,575.5 L469.4,573.1 L469.9,570.7 L470.4,568.3 L470.8,565.9 L471.3,563.5 L471.8,561.2 L472.3,558.8 L472.8,556.5 L473.2,554.2 L473.7,551.9 L474.2,549.6 L474.7,547.3 L475.2,545.1 L475.7,542.9 L476.1,540.7 L476.6,538.5 L477.1,536.3 L477.6,534.2 L478.1,532.1 L478.5,530.1 L479.0,528.0 L479.5,526.0 L480.0,524.1 L480.5,522.1 L480.9,520.2 L481.4,518.3 L481.9,516.5 L482.4,514.7 L482.9,512.9 L483.3,511.2 L483.8,509.5 L484.3,507.9 L484.8,506.2 L485.3,504.7 L485.8,503.1 L486.2,501.7 L486.7,500.2 L487.2,498.8 L487.7,497.5 L488.2,496.1 L488.6,494.9 L489.1,493.7 L489.6,492.5 L490.1,491.4 L490.6,490.3 L491.0,489.3 L491.5,488.3 L492.0,487.3 L492.5,486.5 L493.0,485.6 L493.4,484.9 L493.9,484.1 L494.4,483.5 L494.9,482.8 L495.4,482.3 L495.9,481.7 L496.3,481.3 L496.8,480.8 L497.3,480.5 L497.8,480.2 L498.3,479.9 L498.7,479.7 L499.2,479.6 L499.7,479.5 L500.2,479.4 L500.7,479.4 L501.1,479.5 L501.6,479.6 L502.1,479.8 L502.6,480.0 L503.1,480.3 L503.6,480.6 L504.0,481.0 L504.5,481.5 L505.0,482.0 L505.5,482.5 L506.0,483.1 L506.4,483.8 L506.9,484.5 L507.4,485.2 L507.9,486.0 L508.4,486.9 L508.8,487.8 L509.3,488.7 L509.8,489.7 L510.3,490.8 L510.8,491.9 L511.2,493.0 L511.7,494.2 L512.2,495.5 L512.7,496.7 L513.2,498.1 L513.7,499.5 L514.1,500.9 L514.6,502.3 L515.1,503.8 L515.6,505.4 L516.1,507.0 L516.5,508.6 L517.0,510.3 L517.5,512.0 L518.0,513.7 L518.5,515.5 L518.9,517.3 L519.4,519.2 L519.9,521.1 L520.4,523.0 L520.9,525.0 L521.3,527.0 L521.8,529.0 L522.3,531.0 L522.8,533.1 L523.3,535.2 L523.8,537.3 L524.2,539.5 L524.7,541.7 L525.2,543.9 L525.7,546.1 L526.2,548.4 L526.6,550.6 L527.1,552.9 L527.6,555.2 L528.1,557.6 L528.6,559.9 L529.0,562.2 L529.5,564.6 L530.0,567.0 L530.5,569.4 L531.0,571.8 L531.4,574.2 L531.9,576.6 L532.4,579.0 L532.9,581.5 L533.4,583.9 L533.9,586.4 L534.3,588.8 L534.8,591.2 L535.3,593.7 L535.8,596.1 L536.3,598.6 L536.7,601.0 L537.2,603.4 L537.7,605.8 L538.2,608.3 L538.7,610.7 L539.1,613.1 L539.6,615.5 L540.1,617.8 L540.6,620.2 L541.1,622.5 L541.6,624.9 L542.0,627.2 L542.5,629.5 L543.0,631.8 L543.5,634.0 L544.0,636.2 L544.4,638.5 L544.9,640.7 L545.4,642.8 L545.9,645.0 L546.4,647.1 L546.8,649.2 L547.3,651.2 L547.8,653.3 L548.3,655.3 L548.8,657.2 L549.2,659.2 L549.7,661.1 L550.2,662.9 L550.7,664.8 L551.2,666.6 L551.7,668.3 L552.1,670.0 L552.6,671.7 L553.1,673.4 L553.6,675.0 L554.1,676.5 L554.5,678.1 L555.0,679.6 L555.5,681.0 L556.0,682.4 L556.5,683.7 L556.9,685.0 L557.4,686.3 L557.9,687.5 L558.4,688.7 L558.9,689.8 L559.3,690.9 L559.8,691.9 L560.3,692.9 L560.8,693.8 L561.3,694.7 L561.8,695.5 L562.2,696.3 L562.7,697.0 L563.2,697.6 L563.7,698.3 L564.2,698.8 L564.6,699.3 L565.1,699.8 L565.6,700.2 L566.1,700.6 L566.6,700.9 L567.0,701.1 L567.5,701.3 L568.0,701.4 L568.5,701.5 L569.0,701.6 L569.4,701.5 L569.9,701.5 L570.4,701.3 L570.9,701.2 L571.4,700.9 L571.9,700.6 L572.3,700.3 L572.8,699.9 L573.3,699.5 L573.8,699.0 L574.3,698.4 L574.7,697.8 L575.2,697.1 L575.7,696.4 L576.2,695.7 L576.7,694.9 L577.1,694.0 L577.6,693.1 L578.1,692.1 L578.6,691.1 L579.1,690.1 L579.5,689.0 L580.0,687.8 L580.5,686.6 L581.0,685.4 L581.5,684.1 L582.0,682.7 L582.4,681.3 L582.9,679.9 L583.4,678.4 L583.9,676.9 L584.4,675.4 L584.8,673.8 L585.3,672.1 L585.8,670.5 L586.3,668.8 L586.8,667.0 L587.2,665.2 L587.7,663.4 L588.2,661.5 L588.7,659.6 L589.2,657.7 L589.6,655.7 L590.1,653.8 L590.6,651.7 L591.1,649.7 L591.6,647.6 L592.1,645.5 L592.5,643.4 L593.0,641.2 L593.5,639.0 L594.0,636.8 L594.5,634.6 L594.9,632.3 L595.4,630.0 L595.9,627.8 L596.4,625.4 L596.9,623.1 L597.3,620.8 L597.8,618.4 L598.3,616.0 L598.8,613.7 L599.3,611.3 L599.8,608.9 L600.2,606.5 L600.7,604.0 L601.2,601.6 L601.7,599.2 L602.2,596.7 L602.6,594.3 L603.1,591.9 L603.6,589.4 L604.1,587.0 L604.6,584.5 L605.0,582.1 L605.5,579.7 L606.0,577.2 L606.5,574.8 L607.0,572.4 L607.4,570.0 L607.9,567.6 L608.4,565.2 L608.9,562.8 L609.4,560.5 L609.9,558.1 L610.3,555.8 L610.8,553.5 L611.3,551.2 L611.8,548.9 L612.3,546.7 L612.7,544.4 L613.2,542.2 L613.7,540.0 L614.2,537.9 L614.7,535.7 L615.1,533.6 L615.6,531.5 L616.1,529.5 L616.6,527.5 L617.1,525.5 L617.5,523.5 L618.0,521.6 L618.5,519.7 L619.0,517.8 L619.5,516.0 L620.0,514.2 L620.4,512.4 L620.9,510.7 L621.4,509.0 L621.9,507.4 L622.4,505.8 L622.8,504.2 L623.3,502.7 L623.8,501.2 L624.3,499.8 L624.8,498.4 L625.2,497.1 L625.7,495.8 L626.2,494.5 L626.7,493.3 L627.2,492.2 L627.6,491.0 L628.1,490.0 L628.6,489.0 L629.1,488.0 L629.6,487.1 L630.1,486.2 L630.5,485.4 L631.0,484.6 L631.5,483.9 L632.0,483.3 L632.5,482.7 L632.9,482.1 L633.4,481.6 L633.9,481.1 L634.4,480.7 L634.9,480.4 L635.3,480.1 L635.8,479.9 L636.3,479.7 L636.8,479.5 L637.3,479.5 L637.8,479.4 L638.2,479.5 L638.7,479.5 L639.2,479.7 L639.7,479.9 L640.2,480.1 L640.6,480.4 L641.1,480.8 L641.6,481.2 L642.1,481.6 L642.6,482.1 L643.0,482.7 L643.5,483.3 L644.0,484.0 L644.5,484.7 L645.0,485.4 L645.4,486.3 L645.9,487.1 L646.4,488.0 L646.9,489.0 L647.4,490.0 L647.9,491.1 L648.3,492.2 L648.8,493.4 L649.3,494.6 L649.8,495.8 L650.3,497.1 L650.7,498.5 L651.2,499.9 L651.7,501.3 L652.2,502.8 L652.7,504.3 L653.1,505.8 L653.6,507.4 L654.1,509.1 L654.6,510.8 L655.1,512.5 L655.5,514.2 L656.0,516.0 L656.5,517.9 L657.0,519.7 L657.5,521.6 L658.0,523.6 L658.4,525.5 L658.9,527.5 L659.4,529.6 L659.9,531.6 L660.4,533.7 L660.8,535.8 L661.3,538.0 L661.8,540.1 L662.3,542.3 L662.8,544.5 L663.2,546.8 L663.7,549.0 L664.2,551.3 L664.7,553.6 L665.2,555.9 L665.6,558.2 L666.1,560.6 L666.6,562.9 L667.1,565.3 L667.6,567.7 L668.1,570.1 L668.5,572.5 L669.0,574.9 L669.5,577.3 L670.0,579.7 L670.5,582.2 L670.9,584.6 L671.4,587.1 L671.9,589.5 L672.4,591.9 L672.9,594.4 L673.3,596.8 L673.8,599.3 L674.3,601.7 L674.8,604.1 L675.3,606.5 L675.7,609.0 L676.2,611.4 L676.7,613.7 L677.2,616.1 L677.7,618.5 L678.2,620.9 L678.6,623.2 L679.1,625.5 L679.6,627.8 L680.1,630.1 L680.6,632.4 L681.0,634.6 L681.5,636.9 L682.0,639.1 L682.5,641.3 L683.0,643.4 L683.4,645.6 L683.9,647.7 L684.4,649.8 L684.9,651.8 L685.4,653.8 L685.9,655.8 L686.3,657.8 L686.8,659.7 L687.3,661.6 L687.8,663.5 L688.3,665.3 L688.7,667.1 L689.2,668.8 L689.7,670.5 L690.2,672.2 L690.7,673.8 L691.1,675.4 L691.6,677.0 L692.1,678.5 L692.6,680.0 L693.1,681.4 L693.5,682.8 L694.0,684.1 L694.5,685.4 L695.0,686.6 L695.5,687.8 L696.0,689.0 L696.4,690.1 L696.9,691.2 L697.4,692.2 L697.9,693.1 L698.4,694.0 L698.8,694.9 L699.3,695.7 L699.8,696.5 L700.3,697.2 L700.8,697.8 L701.2,698.4 L701.7,699.0 L702.2,699.5 L702.7,699.9 L703.2,700.3 L703.6,700.7 L704.1,700.9 L704.6,701.2 L705.1,701.3 L705.6,701.5 L706.1,701.5 L706.5,701.6 L707.0,701.5 L707.5,701.4 L708.0,701.3 L708.5,701.1 L708.9,700.9 L709.4,700.5 L709.9,700.2 L710.4,699.8 L710.9,699.3 L711.3,698.8 L711.8,698.2 L712.3,697.6 L712.8,696.9 L713.3,696.2 L713.7,695.4 L714.2,694.6 L714.7,693.8 L715.2,692.8 L715.7,691.9 L716.2,690.8 L716.6,689.8 L717.1,688.6 L717.6,687.5 L718.1,686.3 L718.6,685.0 L719.0,683.7 L719.5,682.3 L720.0,680.9 L720.5,679.5 L721.0,678.0 L721.4,676.5 L721.9,674.9 L722.4,673.3 L722.9,671.7 L723.4,670.0 L723.8,668.3 L724.3,666.5 L724.8,664.7 L725.3,662.9 L725.8,661.0 L726.3,659.1 L726.7,657.2 L727.2,655.2 L727.7,653.2 L728.2,651.1 L728.7,649.1 L729.1,647.0 L729.6,644.9 L730.1,642.7 L730.6,640.6 L731.1,638.4 L731.5,636.2 L732.0,633.9 L732.5,631.7 L733.0,629.4 L733.5,627.1 L734.0,624.8 L734.4,622.4 L734.9,620.1 L735.4,617.7 L735.9,615.4 L736.4,613.0 L736.8,610.6 L737.3,608.2 L737.8,605.8 L738.3,603.3 L738.8,600.9 L739.2,598.5 L739.7,596.0 L740.2,593.6 L740.7,591.2 L741.2,588.7 L741.6,586.3 L742.1,583.8 L742.6,581.4 L743.1,579.0 L743.6,576.5 L744.1,574.1 L744.5,571.7 L745.0,569.3 L745.5,566.9 L746.0,564.5 L746.5,562.2 L746.9,559.8 L747.4,557.5 L747.9,555.1 L748.4,552.8 L748.9,550.5 L749.3,548.3 L749.8,546.0 L750.3,543.8 L750.8,541.6 L751.3,539.4 L751.7,537.3 L752.2,535.1 L752.7,533.0 L753.2,531.0 L753.7,528.9 L754.2,526.9 L754.6,524.9 L755.1,522.9 L755.6,521.0 L756.1,519.1 L756.6,517.3 L757.0,515.5 L757.5,513.7 L758.0,511.9 L758.5,510.2 L759.0,508.6 L759.4,506.9 L759.9,505.3 L760.4,503.8 L760.9,502.3 L761.4,500.8 L761.8,499.4 L762.3,498.0 L762.8,496.7 L763.3,495.4 L763.8,494.2 L764.3,493.0 L764.7,491.8 L765.2,490.7 L765.7,489.7 L766.2,488.7 L766.7,487.7 L767.1,486.8 L767.6,486.0 L768.1,485.2 L768.6,484.4 L769.1,483.7 L769.5,483.1 L770.0,482.5 L770.5,481.9 L771.0,481.5 L771.5,481.0 L771.9,480.6 L772.4,480.3 L772.9,480.0 L773.4,479.8 L773.9,479.6 L774.4,479.5 L774.8,479.4 L775.3,479.4 L775.8,479.5 L776.3,479.6 L776.8,479.7 L777.2,479.9 L777.7,480.2 L778.2,480.5 L778.7,480.9 L779.2,481.3 L779.6,481.8 L780.1,482.3 L780.6,482.8 L781.1,483.5 L781.6,484.2 L782.0,484.9 L782.5,485.7 L783.0,486.5 L783.5,487.4 L784.0,488.3 L784.5,489.3 L784.9,490.3 L785.4,491.4 L785.9,492.5 L786.4,493.7 L786.9,494.9 L787.3,496.2 L787.8,497.5 L788.3,498.9 L788.8,500.3 L789.3,501.7 L789.7,503.2 L790.2,504.7 L790.7,506.3 L791.2,507.9 L791.7,509.6 L792.2,511.3 L792.6,513.0 L793.1,514.8 L793.6,516.6 L794.1,518.4 L794.6,520.3 L795.0,522.2 L795.5,524.1 L796.0,526.1 L796.5,528.1 L797.0,530.1 L797.4,532.2 L797.9,534.3 L798.4,536.4 L798.9,538.6 L799.4,540.7 L799.8,542.9 L800.3,545.2 L800.8,547.4 L801.3,549.7 L801.8,551.9 L802.3,554.2 L802.7,556.6 L803.2,558.9 L803.7,561.2 L804.2,563.6 L804.7,566.0 L805.1,568.4 L805.6,570.8 L806.1,573.2 L806.6,575.6 L807.1,578.0 L807.5,580.4 L808.0,582.9 L808.5,585.3 L809.0,587.8 L809.5,590.2 L809.9,592.6 L810.4,595.1 L810.9,597.5 L811.4,600.0 L811.9,602.4 L812.4,604.8 L812.8,607.2 L813.3,609.6 L813.8,612.0 L814.3,614.4 L814.8,616.8 L815.2,619.2 L815.7,621.5 L816.2,623.9 L816.7,626.2 L817.2,628.5 L817.6,630.8 L818.1,633.0 L818.6,635.3 L819.1,637.5 L819.6,639.7 L820.0,641.9 L820.5,644.0 L821.0,646.2 L821.5,648.3 L822.0,650.3 L822.5,652.4 L822.9,654.4 L823.4,656.4 L823.9,658.3 L824.4,660.2 L824.9,662.1 L825.3,664.0 L825.8,665.8 L826.3,667.6 L826.8,669.3 L827.3,671.0 L827.7,672.7 L828.2,674.3 L828.7,675.9 L829.2,677.4 L829.7,678.9 L830.2,680.4 L830.6,681.8 L831.1,683.2 L831.6,684.5 L832.1,685.8 L832.6,687.0 L833.0,688.2 L833.5,689.3 L834.0,690.4 L834.5,691.5 L835.0,692.4 L835.4,693.4 L835.9,694.3 L836.4,695.1 L836.9,695.9 L837.4,696.7 L837.8,697.4 L838.3,698.0 L838.8,698.6 L839.3,699.1 L839.8,699.6 L840.3,700.0 L840.7,700.4 L841.2,700.7 L841.7,701.0 L842.2,701.2 L842.7,701.4 L843.1,701.5 L843.6,701.6 L844.1,701.6 L844.6,701.5 L845.1,701.4 L845.5,701.2 L846.0,701.0 L846.5,700.8 L847.0,700.5 L847.5,700.1 L847.9,699.7 L848.4,699.2 L848.9,698.6 L849.4,698.1 L849.9,697.4 L850.4,696.7 L850.8,696.0 L851.3,695.2 L851.8,694.4 L852.3,693.5 L852.8,692.6 L853.2,691.6 L853.7,690.5 L854.2,689.4 L854.7,688.3 L855.2,687.1 L855.6,685.9 L856.1,684.6 L856.6,683.3 L857.1,681.9 L857.6,680.5 L858.0,679.1 L858.5,677.6 L859.0,676.1 L859.5,674.5 L860.0,672.9 L860.5,671.2 L860.9,669.5 L861.4,667.8 L861.9,666.0 L862.4,664.2 L862.9,662.3 L863.3,660.5 L863.8,658.5 L864.3,656.6 L864.8,654.6 L865.3,652.6 L865.7,650.6 L866.2,648.5 L866.7,646.4 L867.2,644.3 L867.7,642.1 L868.1,639.9 L868.6,637.8 L869.1,635.5 L869.6,633.3 L870.1,631.0 L870.6,628.7 L871.0,626.4 L871.5,624.1 L872.0,621.8 L872.5,619.4 L873.0,617.1 L873.4,614.7 L873.9,612.3 L874.4,609.9 L874.9,607.5 L875.4,605.1 L875.8,602.6 L876.3,600.2 L876.8,597.8 L877.3,595.3 L877.8,592.9 L878.2,590.5 L878.7,588.0 L879.2,585.6 L879.7,583.1 L880.2,580.7 L880.7,578.3 L881.1,575.8 L881.6,573.4 L882.1,571.0 L882.6,568.6 L883.1,566.2 L883.5,563.9 L884.0,561.5 L884.5,559.1 L885.0,556.8 L885.5,554.5 L885.9,552.2 L886.4,549.9 L886.9,547.6 L887.4,545.4 L887.9,543.2 L888.4,541.0 L888.8,538.8 L889.3,536.7 L889.8,534.5 L890.3,532.4 L890.8,530.4 L891.2,528.3 L891.7,526.3 L892.2,524.3 L892.7,522.4 L893.2,520.5 L893.6,518.6 L894.1,516.8 L894.6,514.9 L895.1,513.2 L895.6,511.4 L896.0,509.7 L896.5,508.1 L897.0,506.5 L897.5,504.9 L898.0,503.4 L898.5,501.9 L898.9,500.4 L899.4,499.0 L899.9,497.6 L900.4,496.3 L900.9,495.1 L901.3,493.8 L901.8,492.7 L902.3,491.5 L902.8,490.4 L903.3,489.4 L903.7,488.4 L904.2,487.5 L904.7,486.6 L905.2,485.8 L905.7,485.0 L906.1,484.2 L906.6,483.5 L907.1,482.9 L907.6,482.3 L908.1,481.8 L908.6,481.3 L909.0,480.9 L909.5,480.5 L910.0,480.2 L910.5,480.0 L911.0,479.7 L911.4,479.6 L911.9,479.5 L912.4,479.4 L912.9,479.4 L913.4,479.5 L913.8,479.6 L914.3,479.8 L914.8,480.0 L915.3,480.3 L915.8,480.6 L916.2,481.0 L916.7,481.4 L917.2,481.9 L917.7,482.4 L918.2,483.0 L918.7,483.7 L919.1,484.4 L919.6,485.1 L920.1,485.9 L920.6,486.7 L921.1,487.6 L921.5,488.6 L922.0,489.6 L922.5,490.6 L923.0,491.7 L923.5,492.9 L923.9,494.0 L924.4,495.3 L924.9,496.6 L925.4,497.9 L925.9,499.3 L926.4,500.7 L926.8,502.1 L927.3,503.6 L927.8,505.2 L928.3,506.8 L928.8,508.4 L929.2,510.0 L929.7,511.7 L930.2,513.5 L930.7,515.3 L931.2,517.1 L931.6,518.9 L932.1,520.8 L932.6,522.7 L933.1,524.7 L933.6,526.7 L934.0,528.7 L934.5,530.7 L935.0,532.8 L935.5,534.9 L936.0,537.0 L936.5,539.2 L936.9,541.4 L937.4,543.6 L937.9,545.8 L938.4,548.0 L938.9,550.3 L939.3,552.6 L939.8,554.9 L940.3,557.2 L940.8,559.6 L941.3,561.9 L941.7,564.3 L942.2,566.7 L942.7,569.0 L943.2,571.4 L943.7,573.9 L944.1,576.3 L944.6,578.7 L945.1,581.1 L945.6,583.6 L946.1,586.0 L946.6,588.4 L947.0,590.9 L947.5,593.3 L948.0,595.8 L948.5,598.2 L949.0,600.6 L949.4,603.1 L949.9,605.5 L950.4,607.9 L950.9,610.3 L951.4,612.7 L951.8,615.1 L952.3,617.5 L952.8,619.8 L953.3,622.2 L953.8,624.5 L954.2,626.8 L954.7,629.1 L955.2,631.4 L955.7,633.7 L956.2,635.9 L956.7,638.1 L957.1,640.3 L957.6,642.5 L958.1,644.7 L958.6,646.8 L959.1,648.9 L959.5,650.9 L960.0,653.0 L960.5,655.0 L961.0,656.9 L961.5,658.9 L961.9,660.8 L962.4,662.7 L962.9,664.5 L963.4,666.3 L963.9,668.1 L964.3,669.8 L964.8,671.5 L965.3,673.1 L965.8,674.8 L966.3,676.3 L966.8,677.9 L967.2,679.3 L967.7,680.8 L968.2,682.2 L968.7,683.5 L969.2,684.9 L969.6,686.1 L970.1,687.3 L970.6,688.5 L971.1,689.6 L971.6,690.7 L972.0,691.7 L972.5,692.7 L973.0,693.7 L973.5,694.5 L974.0,695.4 L974.4,696.1 L974.9,696.9 L975.4,697.5 L975.9,698.2 L976.4,698.7 L976.9,699.3 L977.3,699.7 L977.8,700.2 L978.3,700.5 L978.8,700.8 L979.3,701.1 L979.7,701.3 L980.2,701.4 L980.7,701.5 L981.2,701.6 L981.7,701.6 L982.1,701.5 L982.6,701.4 L983.1,701.2 L983.6,701.0 L984.1,700.7 L984.6,700.4 L985.0,700.0 L985.5,699.5 L986.0,699.0 L986.5,698.5 L987.0,697.9 L987.4,697.2 L987.9,696.5 L988.4,695.8 L988.9,695.0 L989.4,694.1 L989.8,693.2 L990.3,692.3 L990.8,691.3 L991.3,690.2 L991.8,689.1 L992.2,688.0 L992.7,686.8 L993.2,685.5 L993.7,684.3 L994.2,682.9 L994.7,681.5 L995.1,680.1 L995.6,678.7 L996.1,677.2 L996.6,675.6 L997.1,674.0 L997.5,672.4 L998.0,670.7 L998.5,669.0" stroke="#2020E0"/></g></svg>
<div class="t ax" style="right:995.8px;top:459.0px">8V</div>
<div class="t ax" style="right:995.8px;top:474.6px">7V</div>
<div class="t ax" style="right:995.8px;top:490.2px">6V</div>
<div class="t ax" style="right:995.8px;top:505.9px">5V</div>
<div class="t ax" style="right:995.8px;top:521.5px">4V</div>
<div class="t ax" style="right:995.8px;top:537.1px">3V</div>
<div class="t ax" style="right:995.8px;top:552.8px">2V</div>
<div class="t ax" style="right:995.8px;top:568.4px">1V</div>
<div class="t ax" style="right:995.8px;top:584.0px">0V</div>
<div class="t ax" style="right:995.8px;top:599.6px">-1V</div>
<div class="t ax" style="right:995.8px;top:615.2px">-2V</div>
<div class="t ax" style="right:995.8px;top:630.9px">-3V</div>
<div class="t ax" style="right:995.8px;top:646.5px">-4V</div>
<div class="t ax" style="right:995.8px;top:662.1px">-5V</div>
<div class="t ax" style="right:995.8px;top:677.8px">-6V</div>
<div class="t ax" style="right:995.8px;top:693.4px">-7V</div>
<div class="t ax" style="right:995.8px;top:709.0px">-8V</div>
<div class="t ax" style="left:-3.2px;width:80px;text-align:center;top:724.5px;letter-spacing:0.6px">0.0µs</div>
<div class="t ax" style="left:93.0px;width:80px;text-align:center;top:724.5px;letter-spacing:0.6px">0.1µs</div>
<div class="t ax" style="left:189.2px;width:80px;text-align:center;top:724.5px;letter-spacing:0.6px">0.2µs</div>
<div class="t ax" style="left:285.4px;width:80px;text-align:center;top:724.5px;letter-spacing:0.6px">0.3µs</div>
<div class="t ax" style="left:381.6px;width:80px;text-align:center;top:724.5px;letter-spacing:0.6px">0.4µs</div>
<div class="t ax" style="left:477.8px;width:80px;text-align:center;top:724.5px;letter-spacing:0.6px">0.5µs</div>
<div class="t ax" style="left:574.0px;width:80px;text-align:center;top:724.5px;letter-spacing:0.6px">0.6µs</div>
<div class="t ax" style="left:670.2px;width:80px;text-align:center;top:724.5px;letter-spacing:0.6px">0.7µs</div>
<div class="t ax" style="left:766.4px;width:80px;text-align:center;top:724.5px;letter-spacing:0.6px">0.8µs</div>
<div class="t ax" style="left:862.6px;width:80px;text-align:center;top:724.5px;letter-spacing:0.6px">0.9µs</div>
<div class="t ax" style="left:958.8px;width:80px;text-align:center;top:724.5px;letter-spacing:0.6px">1.0µs</div>
<div class="t" style="left:264px;top:449.5px;color:#40F040;font-size:13px;font-weight:bold">V(a)</div>
<div class="t" style="left:744.5px;top:449.5px;color:#2828E8;font-size:13px;font-weight:bold">V(b)</div>
<div class="a" style="left:973px;top:752px;width:50px;height:16px;border-left:1px solid #808080;border-top:1px solid #808080"></div>
</body></html>
